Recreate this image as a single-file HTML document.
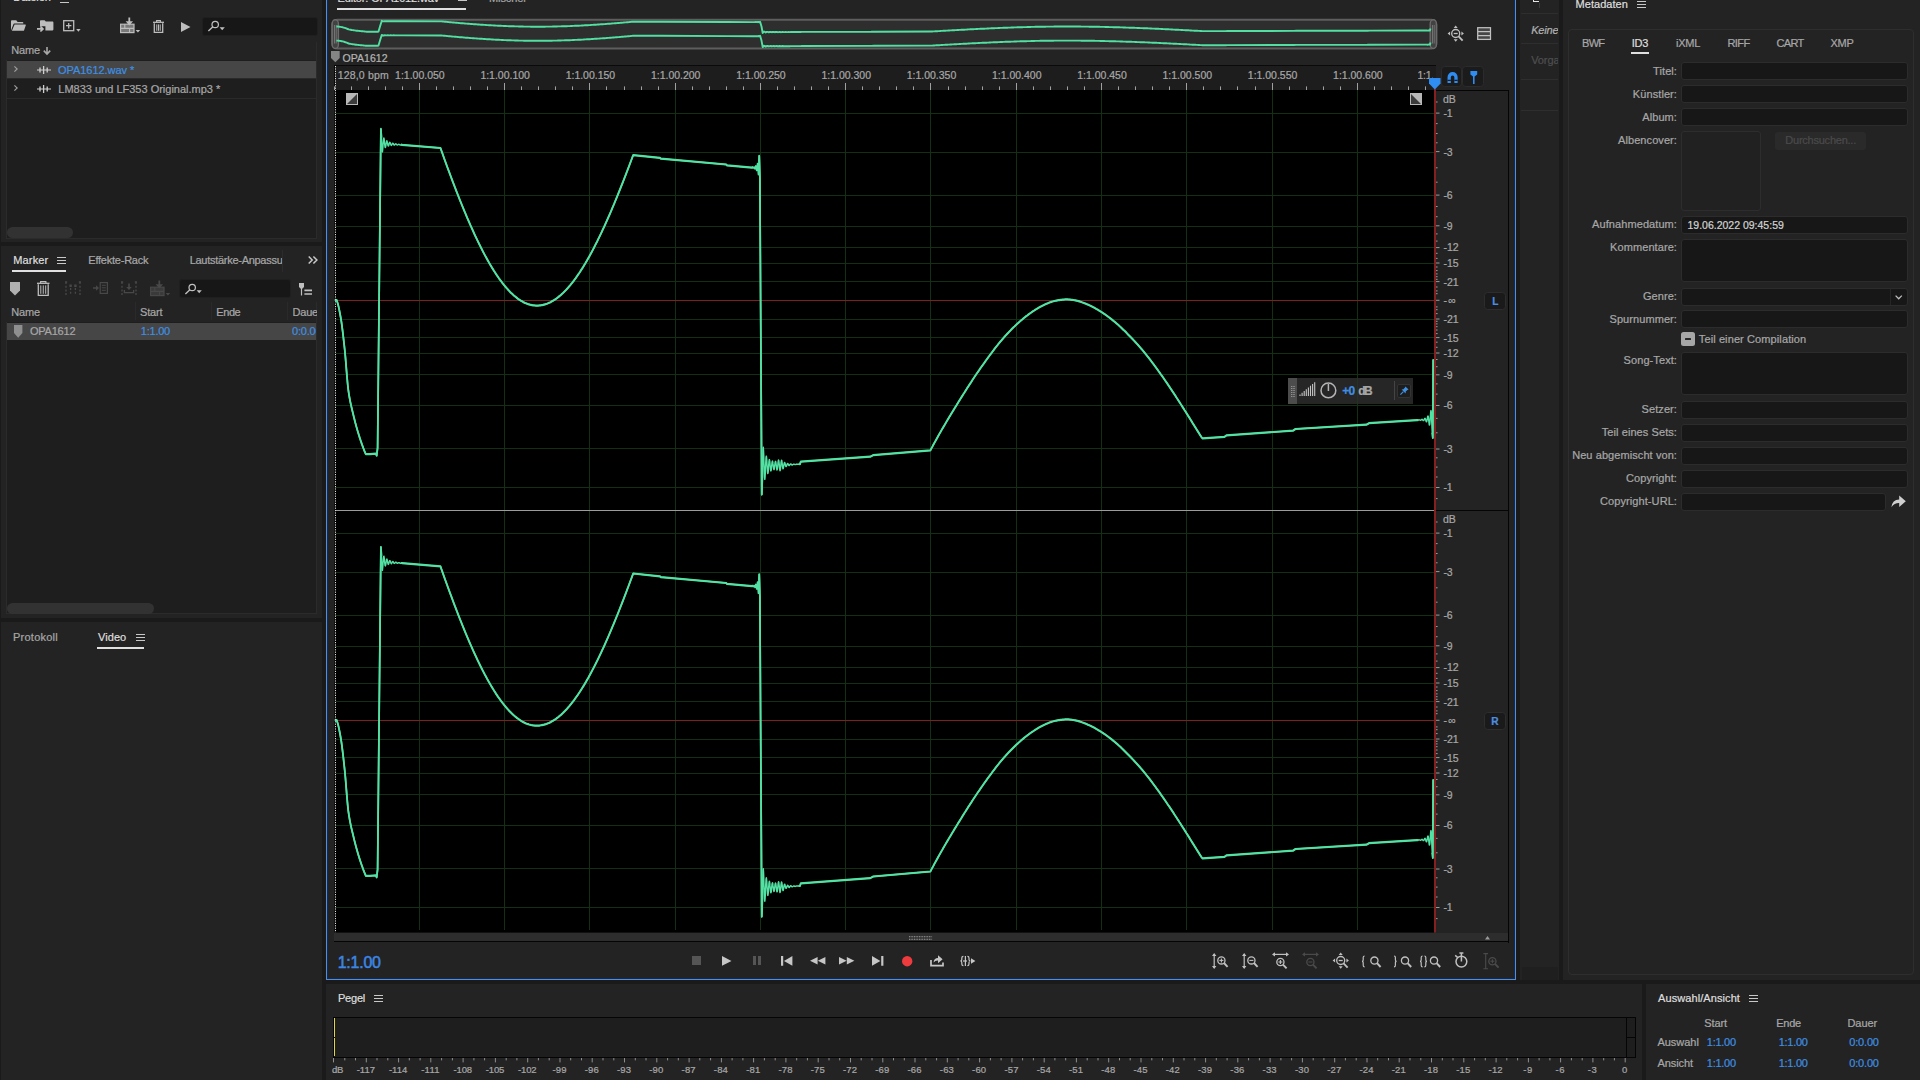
<!DOCTYPE html>
<html><head><meta charset="utf-8"><title>Adobe Audition</title>
<style>
html,body{margin:0;padding:0;background:#1a1a1a;}
body{width:1920px;height:1080px;position:relative;overflow:hidden;font-family:"Liberation Sans",sans-serif;font-size:11px;color:#a7a7a7;}
div{position:absolute;box-sizing:border-box;-webkit-text-stroke:0.22px;}
</style></head><body>
<div style="left:1px;top:0px;width:321px;height:242px;background:#232323;"></div>
<div style="top:-8.11px;font-size:11px;line-height:11px;color:#dedede;white-space:pre;left:13.30px;letter-spacing:-0.059px;">Dateien</div>
<svg style="position:absolute;left:60px;top:-4.5px;overflow:visible" width="9" height="7" viewBox="0 0 9 7" ><path d="M0 .5H9M0 3.5H9M0 6.5H9" stroke="#c8c8c8" stroke-width="1" fill="none"/></svg>
<svg style="position:absolute;left:10.8px;top:20px;overflow:visible" width="15" height="11" viewBox="0 0 15 11" ><path d="M0 1.2Q0 .3 .9 .3H5.2L6.6 1.9H11.6Q12.3 1.9 12.3 2.7V3.6H3.4Q2.6 3.6 2.3 4.4L0 10.6Z" fill="#bdbdbd"/><path d="M3.6 4.5H14.3Q15 4.5 14.8 5.2L13.1 10.2Q12.9 10.8 12.2 10.8H.9Z" fill="#bdbdbd"/></svg>
<svg style="position:absolute;left:36.7px;top:20px;overflow:visible" width="17" height="13" viewBox="0 0 17 13" ><path d="M3 .9Q3 .2 3.8 .2H7.6L8.8 1.6H15.6Q16.4 1.6 16.4 2.4V9.6Q16.4 10.4 15.6 10.4H8.4V6.2H3Z" fill="#bdbdbd"/><path d="M0 8.9H5.2M3.4 6.3L6 8.9L3.4 11.5" stroke="#bdbdbd" stroke-width="1.7" fill="none"/></svg>
<svg style="position:absolute;left:62.6px;top:19.8px;overflow:visible" width="18" height="12" viewBox="0 0 18 12" ><rect x=".7" y=".7" width="10" height="10" fill="none" stroke="#bdbdbd" stroke-width="1.3"/><path d="M5.7 3V8.4M3 5.7H8.4" stroke="#bdbdbd" stroke-width="1.3"/><path d="M13.2 9H17.6L15.4 11.8Z" fill="#bdbdbd"/></svg>
<svg style="position:absolute;left:120px;top:17.3px;overflow:visible" width="20" height="16" viewBox="0 0 20 16" ><rect x=".6" y="7.2" width="13.4" height="8.4" fill="#7a7a7a" stroke="#bdbdbd" stroke-width="1.2"/><path d="M.6 11.4H14M4.8 7.2V11.4M9.6 11.4V15.6" stroke="#bdbdbd" stroke-width="1.1"/><path d="M8.4 .6H10.2V4.2H13L9.3 8.6L5.6 4.2H8.4Z" fill="#bdbdbd"/><path d="M15.6 13H20.2L17.9 15.4Z" fill="#bdbdbd"/></svg>
<svg style="position:absolute;left:153px;top:19.5px;overflow:visible" width="11" height="13" viewBox="0 0 11 13" ><path d="M0 2.3H11" stroke="#bdbdbd" stroke-width="1.3"/><path d="M3.6 2V.6H7.4V2" stroke="#bdbdbd" stroke-width="1.1" fill="none"/><path d="M1.3 3.2V12.4H9.7V3.2" stroke="#bdbdbd" stroke-width="1.3" fill="none"/><path d="M3.8 4.4V10.8M5.5 4.4V10.8M7.2 4.4V10.8" stroke="#bdbdbd" stroke-width="1"/></svg>
<svg style="position:absolute;left:180.8px;top:21.5px;overflow:visible" width="9.5" height="10" viewBox="0 0 9.5 10" ><path d="M0 0L9.5 5.0L0 10Z" fill="#bdbdbd"/></svg>
<div style="left:201.5px;top:16.5px;width:116px;height:19px;background:#171717;border-radius:3px;border:1px solid #1f1f1f;"></div>
<svg style="position:absolute;left:208px;top:21.2px;overflow:visible" width="18" height="10" viewBox="0 0 18 10" ><circle cx="7.2" cy="3.5" r="3.2" fill="none" stroke="#c0c0c0" stroke-width="1.25"/><path d="M4.9 5.8L.4 10" stroke="#c0c0c0" stroke-width="1.4"/><path d="M11.6 6.2H16.8L14.2 9.2Z" fill="#c0c0c0"/></svg>
<div style="left:6px;top:60px;width:311px;height:179px;background:#1e1e1e;border:1px solid #2b2b2b;border-top:none;"></div>
<div style="left:316px;top:42px;width:1px;height:18px;background:#2b2b2b;"></div>
<div style="top:44.89px;font-size:11px;line-height:11px;color:#a7a7a7;white-space:pre;left:11.30px;letter-spacing:-0.161px;">Name</div>
<svg style="position:absolute;left:43px;top:46.5px;overflow:visible" width="8" height="8" viewBox="0 0 8 8" ><path d="M4 0V6.4M.8 3.6L4 7L7.2 3.6" stroke="#a8a8a8" stroke-width="1.6" fill="none"/></svg>
<div style="left:7px;top:60.5px;width:309px;height:17px;background:#464646;"></div>
<div style="left:7px;top:78px;width:309px;height:1px;background:#2a2a2a;"></div>
<div style="left:7px;top:97.5px;width:309px;height:1px;background:#2a2a2a;"></div>
<svg style="position:absolute;left:14.2px;top:65.8px;overflow:visible" width="4" height="6" viewBox="0 0 4 6" ><path d="M.4 .3L3.2 3L.4 5.7" stroke="#a0a0a0" stroke-width="1.1" fill="none"/></svg>
<svg style="position:absolute;left:14.2px;top:85px;overflow:visible" width="4" height="6" viewBox="0 0 4 6" ><path d="M.4 .3L3.2 3L.4 5.7" stroke="#a0a0a0" stroke-width="1.1" fill="none"/></svg>
<svg style="position:absolute;left:37px;top:66.3px;overflow:visible" width="14" height="8" viewBox="0 0 14 8" ><path d="M0 4H14" stroke="#d0d0d0" stroke-width="1"/><path d="M3 1.6V6.4M6.6 0V8M10.2 1.6V6.4" stroke="#d0d0d0" stroke-width="1.3"/></svg>
<svg style="position:absolute;left:37px;top:85.3px;overflow:visible" width="14" height="8" viewBox="0 0 14 8" ><path d="M0 4H14" stroke="#d0d0d0" stroke-width="1"/><path d="M3 1.6V6.4M6.6 0V8M10.2 1.6V6.4" stroke="#d0d0d0" stroke-width="1.3"/></svg>
<div style="top:65.19px;font-size:11px;line-height:11px;color:#3f8fe0;white-space:pre;left:58.00px;letter-spacing:-0.049px;">OPA1612.wav *</div>
<div style="top:84.19px;font-size:11px;line-height:11px;color:#a7a7a7;white-space:pre;left:58.30px;letter-spacing:-0.001px;">LM833 und LF353 Original.mp3 *</div>
<div style="left:7px;top:227px;width:66px;height:11px;background:#323232;border-radius:6px;"></div>
<div style="left:1px;top:246px;width:321px;height:372px;background:#232323;"></div>
<div style="top:254.89px;font-size:11px;line-height:11px;color:#dedede;white-space:pre;left:13.30px;letter-spacing:0.129px;">Marker</div>
<svg style="position:absolute;left:56.7px;top:257px;overflow:visible" width="9" height="7" viewBox="0 0 9 7" ><path d="M0 .5H9M0 3.5H9M0 6.5H9" stroke="#c8c8c8" stroke-width="1" fill="none"/></svg>
<div style="left:12px;top:270px;width:54.3px;height:2px;background:#e0e0e0;"></div>
<div style="top:254.89px;font-size:11px;line-height:11px;color:#a7a7a7;white-space:pre;left:88.30px;letter-spacing:-0.231px;">Effekte-Rack</div>
<div style="top:254.89px;font-size:11px;line-height:11px;color:#a7a7a7;white-space:pre;left:189.70px;width:92.5px;overflow:hidden;letter-spacing:-0.28px;">Lautstärke-Anpassung</div>
<div style="left:282px;top:250px;width:1px;height:22px;background:#2c2c2c;"></div>
<svg style="position:absolute;left:308px;top:255.6px;overflow:visible" width="10" height="8" viewBox="0 0 10 8" ><path d="M.7 .5L4.2 4L.7 7.5M5.4 .5L8.9 4L5.4 7.5" stroke="#c8c8c8" stroke-width="1.5" fill="none"/></svg>
<svg style="position:absolute;left:10.3px;top:281.8px;overflow:visible" width="10" height="13.6" viewBox="0 0 10 13.6" ><path d="M0 0H10V8.432L5.0 13.6L0 8.432Z" fill="#b0b0b0"/></svg>
<svg style="position:absolute;left:37px;top:280.5px;overflow:visible" width="12.5" height="15" viewBox="0 0 12.5 15" ><path d="M0 2.3H12.5" stroke="#bdbdbd" stroke-width="1.3"/><path d="M3.6 2V.6H8.9V2" stroke="#bdbdbd" stroke-width="1.1" fill="none"/><path d="M1.3 3.2V14.4H11.2V3.2" stroke="#bdbdbd" stroke-width="1.3" fill="none"/><path d="M3.8 4.4V12.8M6.25 4.4V12.8M8.7 4.4V12.8" stroke="#bdbdbd" stroke-width="1"/></svg>
<svg style="position:absolute;left:65px;top:281px;overflow:visible" width="16" height="14" viewBox="0 0 16 14" ><path d="M1 1V14.4M15 1V14.4" stroke="#484848" stroke-width="1.3" stroke-dasharray="2 1.7"/><path d="M5.6 7V14.4M10.4 7V14.4" stroke="#484848" stroke-width="1.3" stroke-dasharray="2 1.7"/><path d="M4.4 3.6H6.8V6H4.4ZM9.2 3.6H11.6V6H9.2Z" fill="#484848"/><path d="M0 1H2.2M13.8 1H16" stroke="#484848" stroke-width="1.4"/></svg>
<svg style="position:absolute;left:92.8px;top:282px;overflow:visible" width="15" height="12" viewBox="0 0 15 12" ><path d="M0 5.2H3V3.2L6 6L3 8.8V6.8H0Z" fill="#484848"/><rect x="7.2" y=".6" width="7.2" height="10.8" fill="none" stroke="#484848" stroke-width="1.2"/><path d="M8.8 3.3H12.8M8.8 5.8H12.8M8.8 8.3H12.8" stroke="#484848" stroke-width="1"/></svg>
<svg style="position:absolute;left:121.2px;top:281px;overflow:visible" width="16" height="14" viewBox="0 0 16 14" ><path d="M7.2 2.4H8.8V6H10.8L8 9L5.2 6H7.2Z" fill="#484848"/><path d="M3.4 9V11.6H12.6V9" stroke="#484848" stroke-width="1.3" fill="none"/><path d="M1 1V14.4M15 1V14.4" stroke="#484848" stroke-width="1.3" stroke-dasharray="2 1.7"/><path d="M0 1H2.2M13.8 1H16" stroke="#484848" stroke-width="1.4"/></svg>
<svg style="position:absolute;left:150px;top:280px;overflow:visible" width="20" height="16" viewBox="0 0 20 16" ><rect x=".6" y="7.2" width="13.4" height="8.4" fill="#3a3a3a" stroke="#484848" stroke-width="1.2"/><path d="M.6 11.4H14M4.8 7.2V11.4M9.6 11.4V15.6" stroke="#484848" stroke-width="1.1"/><path d="M8.4 .6H10.2V4.2H13L9.3 8.6L5.6 4.2H8.4Z" fill="#484848"/><path d="M15.6 13H20.2L17.9 15.4Z" fill="#484848"/></svg>
<div style="left:179px;top:279px;width:111.5px;height:18.5px;background:#171717;border-radius:3px;border:1px solid #1f1f1f;"></div>
<svg style="position:absolute;left:185px;top:283.5px;overflow:visible" width="18" height="10" viewBox="0 0 18 10" ><circle cx="7.2" cy="3.5" r="3.2" fill="none" stroke="#c0c0c0" stroke-width="1.25"/><path d="M4.9 5.8L.4 10" stroke="#c0c0c0" stroke-width="1.4"/><path d="M11.6 6.2H16.8L14.2 9.2Z" fill="#c0c0c0"/></svg>
<svg style="position:absolute;left:299.2px;top:282.5px;overflow:visible" width="13" height="13" viewBox="0 0 13 13" ><path d="M0 0H5V4L2.5 6.4L0 4Z" fill="#c0c0c0"/><path d="M2.5 6V12.5" stroke="#c0c0c0" stroke-width="1.2"/><path d="M5.4 7.4H13M5.4 11H13" stroke="#c0c0c0" stroke-width="1.6"/></svg>
<div style="left:6px;top:322px;width:311px;height:292px;background:#1e1e1e;border:1px solid #2b2b2b;border-top:none;"></div>
<div style="left:316px;top:302px;width:1px;height:20px;background:#2b2b2b;"></div>
<div style="top:307.49px;font-size:11px;line-height:11px;color:#a7a7a7;white-space:pre;left:11.30px;letter-spacing:-0.161px;">Name</div>
<div style="top:307.49px;font-size:11px;line-height:11px;color:#a7a7a7;white-space:pre;left:140.00px;letter-spacing:-0.146px;">Start</div>
<div style="top:307.49px;font-size:11px;line-height:11px;color:#a7a7a7;white-space:pre;left:216.30px;letter-spacing:-0.423px;">Ende</div>
<div style="top:307.49px;font-size:11px;line-height:11px;color:#a7a7a7;white-space:pre;left:292.50px;width:24.3px;overflow:hidden;letter-spacing:-0.2px;">Dauer</div>
<div style="left:135px;top:302px;width:1px;height:18px;background:#2a2a2a;"></div>
<div style="left:211px;top:302px;width:1px;height:18px;background:#2a2a2a;"></div>
<div style="left:287px;top:302px;width:1px;height:18px;background:#2a2a2a;"></div>
<div style="left:7px;top:322.5px;width:309px;height:17.5px;background:#464646;"></div>
<svg style="position:absolute;left:14.2px;top:324.7px;overflow:visible" width="8.4" height="12.8" viewBox="0 0 8.4 12.8" ><path d="M0 0H8.4V7.936L4.2 12.8L0 7.936Z" fill="#8f8f8f"/></svg>
<div style="top:325.89px;font-size:11px;line-height:11px;color:#a7a7a7;white-space:pre;left:30.00px;letter-spacing:-0.227px;">OPA1612</div>
<div style="top:325.89px;font-size:11px;line-height:11px;color:#3f8fe0;white-space:pre;left:140.80px;letter-spacing:-0.231px;">1:1.00</div>
<div style="top:325.89px;font-size:11px;line-height:11px;color:#3f8fe0;white-space:pre;left:292.00px;width:24px;overflow:hidden;letter-spacing:-0.2px;">0:0.00</div>
<div style="left:7px;top:603px;width:147px;height:10.5px;background:#323232;border-radius:6px;"></div>
<div style="left:1px;top:622px;width:321px;height:458px;background:#232323;"></div>
<div style="top:631.99px;font-size:11px;line-height:11px;color:#a7a7a7;white-space:pre;left:13.00px;letter-spacing:0.245px;">Protokoll</div>
<div style="top:631.99px;font-size:11px;line-height:11px;color:#dedede;white-space:pre;left:98.00px;letter-spacing:0.073px;">Video</div>
<svg style="position:absolute;left:135.8px;top:634px;overflow:visible" width="9" height="7" viewBox="0 0 9 7" ><path d="M0 .5H9M0 3.5H9M0 6.5H9" stroke="#c8c8c8" stroke-width="1" fill="none"/></svg>
<div style="left:97px;top:647px;width:47.3px;height:2px;background:#e0e0e0;"></div>
<div style="left:326px;top:-4px;width:1190px;height:984px;background:#0c2b57;border:1px solid #5c8ccc;"></div>
<div style="left:328px;top:-2px;width:1186px;height:980px;background:#232323;"></div>
<div style="top:-7.51px;font-size:11px;line-height:11px;color:#dedede;white-space:pre;left:337.50px;letter-spacing:-0.150px;">Editor: OPA1612.wav</div>
<svg style="position:absolute;left:458.3px;top:-6px;overflow:visible" width="9" height="7" viewBox="0 0 9 7" ><path d="M0 .5H9M0 3.5H9M0 6.5H9" stroke="#c8c8c8" stroke-width="1" fill="none"/></svg>
<div style="top:-7.51px;font-size:11px;line-height:11px;color:#a7a7a7;white-space:pre;left:489.00px;letter-spacing:-0.115px;">Mischer</div>
<div style="left:337px;top:8px;width:129px;height:2px;background:#e0e0e0;"></div>
<svg style="position:absolute;left:0;top:0" width="1520" height="60"><rect x="332.2" y="19.7" width="1104.2" height="28.8" rx="5" ry="5" fill="#2e2e2e" stroke="#5e5e5e" stroke-width="2"/><rect x="332.2" y="19.7" width="6.2" height="28.8" rx="3" ry="4" fill="#424242" stroke="#6a6a6a" stroke-width="1.4"/><path d="M334.5 25V43.5M336.2 25V43.5" stroke="#808080" stroke-width=".8"/><rect x="1430.2" y="19.7" width="6.2" height="28.8" rx="3" ry="4" fill="#424242" stroke="#6a6a6a" stroke-width="1.4"/><path d="M1432.5 25V43.5M1434.2 25V43.5" stroke="#808080" stroke-width=".8"/><path d="M336.4 26.5 L337.5 26.5 L338.7 26.6 L339.7 26.8 L340.7 26.9 L341.7 27.1 L342.7 27.3 L343.7 27.6 L344.7 27.9 L345.7 28.2 L346.7 28.6 L347.7 29.0 L348.7 29.4 L349.7 29.6 L350.7 29.8 L351.7 30.0 L352.7 30.1 L353.7 30.3 L354.7 30.4 L355.7 30.6 L356.7 30.7 L357.7 30.8 L358.7 30.9 L359.7 31.0 L360.7 31.1 L361.7 31.2 L362.7 31.3 L363.7 31.4 L364.7 31.5 L365.7 31.6 L366.7 31.7 L370.9 31.7 L376.6 31.7 L377.6 31.7 L378.5 31.5 L380.0 26.5 L381.8 20.8 L382.8 21.4 L383.8 21.4 L384.8 21.1 L385.8 21.3 L386.8 21.3 L387.8 21.2 L388.8 21.3 L389.8 21.3 L390.8 21.2 L391.8 21.3 L392.8 21.3 L393.8 21.2 L394.8 21.3 L395.8 21.3 L396.8 21.3 L397.8 21.3 L398.8 21.3 L399.8 21.3 L400.8 21.3 L401.8 21.3 L402.8 21.3 L441.4 21.4 L442.9 21.5 L443.9 21.6 L444.9 21.7 L445.9 21.8 L446.9 21.9 L447.9 22.0 L448.9 22.1 L449.9 22.2 L450.9 22.3 L451.9 22.4 L452.9 22.5 L453.9 22.5 L454.9 22.6 L455.9 22.7 L456.9 22.8 L457.9 22.9 L458.9 23.0 L459.9 23.1 L460.9 23.2 L461.9 23.2 L462.9 23.3 L463.9 23.4 L464.9 23.5 L465.9 23.6 L466.9 23.6 L467.9 23.7 L468.9 23.8 L469.9 23.9 L470.9 24.0 L471.9 24.0 L472.9 24.1 L473.9 24.2 L474.9 24.3 L475.9 24.3 L476.9 24.4 L477.9 24.5 L478.9 24.5 L479.9 24.6 L480.9 24.7 L481.9 24.7 L482.9 24.8 L483.9 24.9 L484.9 24.9 L485.9 25.0 L486.9 25.1 L487.9 25.1 L488.9 25.2 L489.9 25.2 L490.9 25.3 L491.9 25.4 L492.9 25.4 L493.9 25.5 L494.9 25.5 L495.9 25.6 L496.9 25.6 L497.9 25.7 L498.9 25.7 L499.9 25.8 L500.9 25.8 L501.9 25.9 L502.9 25.9 L503.9 26.0 L504.9 26.0 L505.9 26.0 L506.9 26.1 L507.9 26.1 L508.9 26.2 L509.9 26.2 L510.9 26.2 L511.9 26.3 L512.9 26.3 L513.9 26.3 L514.9 26.4 L515.9 26.4 L516.9 26.4 L517.9 26.4 L518.9 26.5 L519.9 26.5 L520.9 26.5 L521.9 26.5 L522.9 26.5 L523.9 26.6 L524.9 26.6 L525.9 26.6 L526.9 26.6 L527.9 26.6 L528.9 26.6 L529.9 26.6 L530.9 26.7 L531.9 26.7 L532.9 26.7 L533.9 26.7 L534.9 26.7 L535.9 26.7 L536.9 26.7 L537.9 26.7 L538.9 26.7 L539.9 26.7 L540.9 26.7 L541.9 26.7 L542.9 26.7 L543.9 26.7 L544.9 26.7 L545.9 26.6 L546.9 26.6 L547.9 26.6 L548.9 26.6 L549.9 26.6 L550.9 26.6 L551.9 26.6 L552.9 26.5 L553.9 26.5 L554.9 26.5 L555.9 26.5 L556.9 26.5 L557.9 26.4 L558.9 26.4 L559.9 26.4 L560.9 26.4 L561.9 26.3 L562.9 26.3 L563.9 26.3 L564.9 26.2 L565.9 26.2 L566.9 26.2 L567.9 26.1 L568.9 26.1 L569.9 26.1 L570.9 26.0 L571.9 26.0 L572.9 25.9 L573.9 25.9 L574.9 25.8 L575.9 25.8 L576.9 25.8 L577.9 25.7 L578.9 25.7 L579.9 25.6 L580.9 25.6 L581.9 25.5 L582.9 25.5 L583.9 25.4 L584.9 25.3 L585.9 25.3 L586.9 25.2 L587.9 25.2 L588.9 25.1 L589.9 25.1 L590.9 25.0 L591.9 24.9 L592.9 24.9 L593.9 24.8 L594.9 24.7 L595.9 24.7 L596.9 24.6 L597.9 24.5 L598.9 24.5 L599.9 24.4 L600.9 24.3 L601.9 24.3 L602.9 24.2 L603.9 24.1 L604.9 24.1 L605.9 24.0 L606.9 23.9 L607.9 23.8 L608.9 23.8 L609.9 23.7 L610.9 23.6 L611.9 23.5 L612.9 23.4 L613.9 23.4 L614.9 23.3 L615.9 23.2 L616.9 23.1 L617.9 23.0 L618.9 23.0 L619.9 22.9 L620.9 22.8 L621.9 22.7 L622.9 22.6 L623.9 22.5 L624.9 22.4 L625.9 22.4 L626.9 22.3 L627.9 22.2 L628.9 22.1 L629.9 22.0 L630.9 21.9 L631.9 21.8 L632.9 21.7 L634.1 21.6 L660.9 21.7 L727.1 22.0 L752.9 22.1 L753.7 22.1 L754.5 22.1 L755.3 22.0 L756.1 22.1 L756.9 22.0 L757.7 22.2 L758.5 21.9 L759.3 22.3 L760.1 21.7 L761.5 26.5 L762.7 33.0 L763.7 31.7 L764.7 31.8 L765.7 32.5 L766.7 31.9 L767.7 31.9 L768.7 32.3 L769.7 32.0 L770.7 31.9 L771.7 32.2 L772.7 32.0 L773.7 31.9 L774.7 32.2 L775.7 32.0 L776.7 31.9 L777.7 32.2 L778.7 32.1 L779.7 31.9 L780.7 32.2 L781.7 32.1 L782.7 31.9 L783.7 32.1 L784.7 32.1 L785.7 32.0 L786.7 32.1 L787.7 32.1 L788.7 32.0 L789.7 32.1 L790.7 32.0 L791.7 32.0 L792.7 32.0 L793.7 32.0 L794.7 32.0 L795.7 32.0 L796.7 32.0 L797.7 32.0 L798.7 32.0 L799.7 32.0 L800.7 32.0 L801.7 31.9 L871.2 31.8 L874.1 31.7 L931.3 31.5 L932.3 31.5 L933.3 31.4 L934.3 31.4 L935.3 31.3 L936.3 31.2 L937.3 31.2 L938.3 31.1 L939.3 31.1 L940.3 31.0 L941.3 30.9 L942.3 30.9 L943.3 30.8 L944.3 30.8 L945.3 30.7 L946.3 30.6 L947.3 30.6 L948.3 30.5 L949.3 30.5 L950.3 30.4 L951.3 30.4 L952.3 30.3 L953.3 30.3 L954.3 30.2 L955.3 30.1 L956.3 30.1 L957.3 30.0 L958.3 30.0 L959.3 29.9 L960.3 29.9 L961.3 29.8 L962.3 29.8 L963.3 29.7 L964.3 29.7 L965.3 29.6 L966.3 29.6 L967.3 29.5 L968.3 29.4 L969.3 29.4 L970.3 29.3 L971.3 29.3 L972.3 29.2 L973.3 29.2 L974.3 29.1 L975.3 29.1 L976.3 29.0 L977.3 29.0 L978.3 28.9 L979.3 28.9 L980.3 28.8 L981.3 28.8 L982.3 28.7 L983.3 28.7 L984.3 28.7 L985.3 28.6 L986.3 28.6 L987.3 28.5 L988.3 28.5 L989.3 28.4 L990.3 28.4 L991.3 28.3 L992.3 28.3 L993.3 28.2 L994.3 28.2 L995.3 28.1 L996.3 28.1 L997.3 28.1 L998.3 28.0 L999.3 28.0 L1000.3 27.9 L1001.3 27.9 L1002.3 27.9 L1003.3 27.8 L1004.3 27.8 L1005.3 27.7 L1006.3 27.7 L1007.3 27.7 L1008.3 27.6 L1009.3 27.6 L1010.3 27.6 L1011.3 27.5 L1012.3 27.5 L1013.3 27.5 L1014.3 27.4 L1015.3 27.4 L1016.3 27.4 L1017.3 27.3 L1018.3 27.3 L1019.3 27.3 L1020.3 27.2 L1021.3 27.2 L1022.3 27.2 L1023.3 27.1 L1024.3 27.1 L1025.3 27.1 L1026.3 27.1 L1027.3 27.0 L1028.3 27.0 L1029.3 27.0 L1030.3 27.0 L1031.3 26.9 L1032.3 26.9 L1033.3 26.9 L1034.3 26.9 L1035.3 26.8 L1036.3 26.8 L1037.3 26.8 L1038.3 26.8 L1039.3 26.8 L1040.3 26.7 L1041.3 26.7 L1042.3 26.7 L1043.3 26.7 L1044.3 26.7 L1045.3 26.7 L1046.3 26.6 L1047.3 26.6 L1048.3 26.6 L1049.3 26.6 L1050.3 26.6 L1051.3 26.6 L1052.3 26.6 L1053.3 26.6 L1054.3 26.5 L1055.3 26.5 L1056.3 26.5 L1057.3 26.5 L1058.3 26.5 L1059.3 26.5 L1060.3 26.5 L1061.3 26.5 L1062.3 26.5 L1063.3 26.5 L1064.3 26.5 L1065.3 26.5 L1066.3 26.5 L1067.3 26.5 L1068.3 26.5 L1069.3 26.5 L1070.3 26.5 L1071.3 26.5 L1072.3 26.5 L1073.3 26.5 L1074.3 26.5 L1075.3 26.5 L1076.3 26.5 L1077.3 26.5 L1078.3 26.5 L1079.3 26.5 L1080.3 26.5 L1081.3 26.6 L1082.3 26.6 L1083.3 26.6 L1084.3 26.6 L1085.3 26.6 L1086.3 26.6 L1087.3 26.6 L1088.3 26.6 L1089.3 26.7 L1090.3 26.7 L1091.3 26.7 L1092.3 26.7 L1093.3 26.7 L1094.3 26.7 L1095.3 26.8 L1096.3 26.8 L1097.3 26.8 L1098.3 26.8 L1099.3 26.8 L1100.3 26.9 L1101.3 26.9 L1102.3 26.9 L1103.3 26.9 L1104.3 26.9 L1105.3 27.0 L1106.3 27.0 L1107.3 27.0 L1108.3 27.0 L1109.3 27.1 L1110.3 27.1 L1111.3 27.1 L1112.3 27.1 L1113.3 27.2 L1114.3 27.2 L1115.3 27.2 L1116.3 27.3 L1117.3 27.3 L1118.3 27.3 L1119.3 27.3 L1120.3 27.4 L1121.3 27.4 L1122.3 27.4 L1123.3 27.5 L1124.3 27.5 L1125.3 27.5 L1126.3 27.6 L1127.3 27.6 L1128.3 27.6 L1129.3 27.7 L1130.3 27.7 L1131.3 27.7 L1132.3 27.8 L1133.3 27.8 L1134.3 27.8 L1135.3 27.9 L1136.3 27.9 L1137.3 28.0 L1138.3 28.0 L1139.3 28.0 L1140.3 28.1 L1141.3 28.1 L1142.3 28.1 L1143.3 28.2 L1144.3 28.2 L1145.3 28.3 L1146.3 28.3 L1147.3 28.3 L1148.3 28.4 L1149.3 28.4 L1150.3 28.5 L1151.3 28.5 L1152.3 28.6 L1153.3 28.6 L1154.3 28.6 L1155.3 28.7 L1156.3 28.7 L1157.3 28.8 L1158.3 28.8 L1159.3 28.9 L1160.3 28.9 L1161.3 29.0 L1162.3 29.0 L1163.3 29.1 L1164.3 29.1 L1165.3 29.2 L1166.3 29.2 L1167.3 29.3 L1168.3 29.3 L1169.3 29.4 L1170.3 29.4 L1171.3 29.5 L1172.3 29.5 L1173.3 29.6 L1174.3 29.6 L1175.3 29.7 L1176.3 29.7 L1177.3 29.8 L1178.3 29.8 L1179.3 29.9 L1180.3 29.9 L1181.3 30.0 L1182.3 30.0 L1183.3 30.1 L1184.3 30.1 L1185.3 30.2 L1186.3 30.2 L1187.3 30.3 L1188.3 30.3 L1189.3 30.4 L1190.3 30.5 L1191.3 30.5 L1192.3 30.6 L1193.3 30.6 L1194.3 30.7 L1195.3 30.7 L1196.3 30.8 L1197.3 30.8 L1198.3 30.9 L1199.3 30.9 L1200.3 31.0 L1201.3 31.0 L1202.3 31.1 L1203.5 31.1 L1225.4 31.1 L1227.4 31.0 L1293.8 30.9 L1296.4 30.8 L1367.3 30.7 L1369.9 30.6 L1417.9 30.5 L1418.7 30.5 L1419.5 30.5 L1420.3 30.5 L1421.1 30.5 L1421.9 30.5 L1422.7 30.5 L1423.5 30.5 L1424.3 30.5 L1425.1 30.5 L1425.9 30.5 L1426.7 30.5 L1427.5 30.6 L1428.3 30.5 L1429.1 30.4 L1429.9 30.6 L1430.5 28.5" fill="none" stroke="#52e0a2" stroke-width="1.9" stroke-linejoin="round"/><path d="M336.4 40.6 L337.5 40.6 L338.7 40.7 L339.7 40.9 L340.7 41.0 L341.7 41.2 L342.7 41.4 L343.7 41.7 L344.7 42.0 L345.7 42.3 L346.7 42.7 L347.7 43.1 L348.7 43.5 L349.7 43.7 L350.7 43.9 L351.7 44.1 L352.7 44.2 L353.7 44.4 L354.7 44.5 L355.7 44.7 L356.7 44.8 L357.7 44.9 L358.7 45.0 L359.7 45.1 L360.7 45.2 L361.7 45.3 L362.7 45.4 L363.7 45.5 L364.7 45.6 L365.7 45.7 L366.7 45.8 L370.9 45.8 L376.6 45.8 L377.6 45.8 L378.5 45.6 L380.0 40.6 L381.8 34.9 L382.8 35.5 L383.8 35.5 L384.8 35.2 L385.8 35.4 L386.8 35.4 L387.8 35.3 L388.8 35.4 L389.8 35.4 L390.8 35.3 L391.8 35.4 L392.8 35.4 L393.8 35.3 L394.8 35.4 L395.8 35.4 L396.8 35.4 L397.8 35.4 L398.8 35.4 L399.8 35.4 L400.8 35.4 L401.8 35.4 L402.8 35.4 L441.4 35.5 L442.9 35.6 L443.9 35.7 L444.9 35.8 L445.9 35.9 L446.9 36.0 L447.9 36.1 L448.9 36.2 L449.9 36.3 L450.9 36.4 L451.9 36.5 L452.9 36.6 L453.9 36.6 L454.9 36.7 L455.9 36.8 L456.9 36.9 L457.9 37.0 L458.9 37.1 L459.9 37.2 L460.9 37.3 L461.9 37.3 L462.9 37.4 L463.9 37.5 L464.9 37.6 L465.9 37.7 L466.9 37.7 L467.9 37.8 L468.9 37.9 L469.9 38.0 L470.9 38.1 L471.9 38.1 L472.9 38.2 L473.9 38.3 L474.9 38.4 L475.9 38.4 L476.9 38.5 L477.9 38.6 L478.9 38.6 L479.9 38.7 L480.9 38.8 L481.9 38.8 L482.9 38.9 L483.9 39.0 L484.9 39.0 L485.9 39.1 L486.9 39.2 L487.9 39.2 L488.9 39.3 L489.9 39.3 L490.9 39.4 L491.9 39.5 L492.9 39.5 L493.9 39.6 L494.9 39.6 L495.9 39.7 L496.9 39.7 L497.9 39.8 L498.9 39.8 L499.9 39.9 L500.9 39.9 L501.9 40.0 L502.9 40.0 L503.9 40.1 L504.9 40.1 L505.9 40.1 L506.9 40.2 L507.9 40.2 L508.9 40.3 L509.9 40.3 L510.9 40.3 L511.9 40.4 L512.9 40.4 L513.9 40.4 L514.9 40.5 L515.9 40.5 L516.9 40.5 L517.9 40.5 L518.9 40.6 L519.9 40.6 L520.9 40.6 L521.9 40.6 L522.9 40.6 L523.9 40.7 L524.9 40.7 L525.9 40.7 L526.9 40.7 L527.9 40.7 L528.9 40.7 L529.9 40.7 L530.9 40.8 L531.9 40.8 L532.9 40.8 L533.9 40.8 L534.9 40.8 L535.9 40.8 L536.9 40.8 L537.9 40.8 L538.9 40.8 L539.9 40.8 L540.9 40.8 L541.9 40.8 L542.9 40.8 L543.9 40.8 L544.9 40.8 L545.9 40.7 L546.9 40.7 L547.9 40.7 L548.9 40.7 L549.9 40.7 L550.9 40.7 L551.9 40.7 L552.9 40.6 L553.9 40.6 L554.9 40.6 L555.9 40.6 L556.9 40.6 L557.9 40.5 L558.9 40.5 L559.9 40.5 L560.9 40.5 L561.9 40.4 L562.9 40.4 L563.9 40.4 L564.9 40.3 L565.9 40.3 L566.9 40.3 L567.9 40.2 L568.9 40.2 L569.9 40.2 L570.9 40.1 L571.9 40.1 L572.9 40.0 L573.9 40.0 L574.9 39.9 L575.9 39.9 L576.9 39.9 L577.9 39.8 L578.9 39.8 L579.9 39.7 L580.9 39.7 L581.9 39.6 L582.9 39.6 L583.9 39.5 L584.9 39.4 L585.9 39.4 L586.9 39.3 L587.9 39.3 L588.9 39.2 L589.9 39.2 L590.9 39.1 L591.9 39.0 L592.9 39.0 L593.9 38.9 L594.9 38.8 L595.9 38.8 L596.9 38.7 L597.9 38.6 L598.9 38.6 L599.9 38.5 L600.9 38.4 L601.9 38.4 L602.9 38.3 L603.9 38.2 L604.9 38.2 L605.9 38.1 L606.9 38.0 L607.9 37.9 L608.9 37.9 L609.9 37.8 L610.9 37.7 L611.9 37.6 L612.9 37.5 L613.9 37.5 L614.9 37.4 L615.9 37.3 L616.9 37.2 L617.9 37.1 L618.9 37.1 L619.9 37.0 L620.9 36.9 L621.9 36.8 L622.9 36.7 L623.9 36.6 L624.9 36.5 L625.9 36.5 L626.9 36.4 L627.9 36.3 L628.9 36.2 L629.9 36.1 L630.9 36.0 L631.9 35.9 L632.9 35.8 L634.1 35.7 L660.9 35.8 L727.1 36.1 L752.9 36.2 L753.7 36.2 L754.5 36.2 L755.3 36.1 L756.1 36.2 L756.9 36.1 L757.7 36.3 L758.5 36.0 L759.3 36.4 L760.1 35.8 L761.5 40.6 L762.7 47.1 L763.7 45.8 L764.7 45.9 L765.7 46.6 L766.7 46.0 L767.7 46.0 L768.7 46.4 L769.7 46.1 L770.7 46.0 L771.7 46.3 L772.7 46.1 L773.7 46.0 L774.7 46.3 L775.7 46.1 L776.7 46.0 L777.7 46.3 L778.7 46.2 L779.7 46.0 L780.7 46.3 L781.7 46.2 L782.7 46.0 L783.7 46.2 L784.7 46.2 L785.7 46.1 L786.7 46.2 L787.7 46.2 L788.7 46.1 L789.7 46.2 L790.7 46.1 L791.7 46.1 L792.7 46.1 L793.7 46.1 L794.7 46.1 L795.7 46.1 L796.7 46.1 L797.7 46.1 L798.7 46.1 L799.7 46.1 L800.7 46.1 L801.7 46.0 L871.2 45.9 L874.1 45.8 L931.3 45.6 L932.3 45.6 L933.3 45.5 L934.3 45.5 L935.3 45.4 L936.3 45.3 L937.3 45.3 L938.3 45.2 L939.3 45.2 L940.3 45.1 L941.3 45.0 L942.3 45.0 L943.3 44.9 L944.3 44.9 L945.3 44.8 L946.3 44.7 L947.3 44.7 L948.3 44.6 L949.3 44.6 L950.3 44.5 L951.3 44.5 L952.3 44.4 L953.3 44.4 L954.3 44.3 L955.3 44.2 L956.3 44.2 L957.3 44.1 L958.3 44.1 L959.3 44.0 L960.3 44.0 L961.3 43.9 L962.3 43.9 L963.3 43.8 L964.3 43.8 L965.3 43.7 L966.3 43.7 L967.3 43.6 L968.3 43.5 L969.3 43.5 L970.3 43.4 L971.3 43.4 L972.3 43.3 L973.3 43.3 L974.3 43.2 L975.3 43.2 L976.3 43.1 L977.3 43.1 L978.3 43.0 L979.3 43.0 L980.3 42.9 L981.3 42.9 L982.3 42.8 L983.3 42.8 L984.3 42.8 L985.3 42.7 L986.3 42.7 L987.3 42.6 L988.3 42.6 L989.3 42.5 L990.3 42.5 L991.3 42.4 L992.3 42.4 L993.3 42.3 L994.3 42.3 L995.3 42.2 L996.3 42.2 L997.3 42.2 L998.3 42.1 L999.3 42.1 L1000.3 42.0 L1001.3 42.0 L1002.3 42.0 L1003.3 41.9 L1004.3 41.9 L1005.3 41.8 L1006.3 41.8 L1007.3 41.8 L1008.3 41.7 L1009.3 41.7 L1010.3 41.7 L1011.3 41.6 L1012.3 41.6 L1013.3 41.6 L1014.3 41.5 L1015.3 41.5 L1016.3 41.5 L1017.3 41.4 L1018.3 41.4 L1019.3 41.4 L1020.3 41.3 L1021.3 41.3 L1022.3 41.3 L1023.3 41.2 L1024.3 41.2 L1025.3 41.2 L1026.3 41.2 L1027.3 41.1 L1028.3 41.1 L1029.3 41.1 L1030.3 41.1 L1031.3 41.0 L1032.3 41.0 L1033.3 41.0 L1034.3 41.0 L1035.3 40.9 L1036.3 40.9 L1037.3 40.9 L1038.3 40.9 L1039.3 40.9 L1040.3 40.8 L1041.3 40.8 L1042.3 40.8 L1043.3 40.8 L1044.3 40.8 L1045.3 40.8 L1046.3 40.7 L1047.3 40.7 L1048.3 40.7 L1049.3 40.7 L1050.3 40.7 L1051.3 40.7 L1052.3 40.7 L1053.3 40.7 L1054.3 40.6 L1055.3 40.6 L1056.3 40.6 L1057.3 40.6 L1058.3 40.6 L1059.3 40.6 L1060.3 40.6 L1061.3 40.6 L1062.3 40.6 L1063.3 40.6 L1064.3 40.6 L1065.3 40.6 L1066.3 40.6 L1067.3 40.6 L1068.3 40.6 L1069.3 40.6 L1070.3 40.6 L1071.3 40.6 L1072.3 40.6 L1073.3 40.6 L1074.3 40.6 L1075.3 40.6 L1076.3 40.6 L1077.3 40.6 L1078.3 40.6 L1079.3 40.6 L1080.3 40.6 L1081.3 40.7 L1082.3 40.7 L1083.3 40.7 L1084.3 40.7 L1085.3 40.7 L1086.3 40.7 L1087.3 40.7 L1088.3 40.7 L1089.3 40.8 L1090.3 40.8 L1091.3 40.8 L1092.3 40.8 L1093.3 40.8 L1094.3 40.8 L1095.3 40.9 L1096.3 40.9 L1097.3 40.9 L1098.3 40.9 L1099.3 40.9 L1100.3 41.0 L1101.3 41.0 L1102.3 41.0 L1103.3 41.0 L1104.3 41.0 L1105.3 41.1 L1106.3 41.1 L1107.3 41.1 L1108.3 41.1 L1109.3 41.2 L1110.3 41.2 L1111.3 41.2 L1112.3 41.2 L1113.3 41.3 L1114.3 41.3 L1115.3 41.3 L1116.3 41.4 L1117.3 41.4 L1118.3 41.4 L1119.3 41.4 L1120.3 41.5 L1121.3 41.5 L1122.3 41.5 L1123.3 41.6 L1124.3 41.6 L1125.3 41.6 L1126.3 41.7 L1127.3 41.7 L1128.3 41.7 L1129.3 41.8 L1130.3 41.8 L1131.3 41.8 L1132.3 41.9 L1133.3 41.9 L1134.3 41.9 L1135.3 42.0 L1136.3 42.0 L1137.3 42.1 L1138.3 42.1 L1139.3 42.1 L1140.3 42.2 L1141.3 42.2 L1142.3 42.2 L1143.3 42.3 L1144.3 42.3 L1145.3 42.4 L1146.3 42.4 L1147.3 42.4 L1148.3 42.5 L1149.3 42.5 L1150.3 42.6 L1151.3 42.6 L1152.3 42.7 L1153.3 42.7 L1154.3 42.7 L1155.3 42.8 L1156.3 42.8 L1157.3 42.9 L1158.3 42.9 L1159.3 43.0 L1160.3 43.0 L1161.3 43.1 L1162.3 43.1 L1163.3 43.2 L1164.3 43.2 L1165.3 43.3 L1166.3 43.3 L1167.3 43.4 L1168.3 43.4 L1169.3 43.5 L1170.3 43.5 L1171.3 43.6 L1172.3 43.6 L1173.3 43.7 L1174.3 43.7 L1175.3 43.8 L1176.3 43.8 L1177.3 43.9 L1178.3 43.9 L1179.3 44.0 L1180.3 44.0 L1181.3 44.1 L1182.3 44.1 L1183.3 44.2 L1184.3 44.2 L1185.3 44.3 L1186.3 44.3 L1187.3 44.4 L1188.3 44.4 L1189.3 44.5 L1190.3 44.6 L1191.3 44.6 L1192.3 44.7 L1193.3 44.7 L1194.3 44.8 L1195.3 44.8 L1196.3 44.9 L1197.3 44.9 L1198.3 45.0 L1199.3 45.0 L1200.3 45.1 L1201.3 45.1 L1202.3 45.2 L1203.5 45.2 L1225.4 45.2 L1227.4 45.1 L1293.8 45.0 L1296.4 44.9 L1367.3 44.8 L1369.9 44.7 L1417.9 44.6 L1418.7 44.6 L1419.5 44.6 L1420.3 44.6 L1421.1 44.6 L1421.9 44.6 L1422.7 44.6 L1423.5 44.6 L1424.3 44.6 L1425.1 44.6 L1425.9 44.6 L1426.7 44.6 L1427.5 44.7 L1428.3 44.6 L1429.1 44.5 L1429.9 44.7 L1430.5 42.6" fill="none" stroke="#52e0a2" stroke-width="1.9" stroke-linejoin="round"/></svg>
<svg style="position:absolute;left:1446.7px;top:25px;overflow:visible" width="18" height="18" viewBox="0 0 18 18" ><circle cx="8.7" cy="8.5" r="4" fill="none" stroke="#c0c0c0" stroke-width="1.35"/><path d="M6.7 8.5H10.7" stroke="#c0c0c0" stroke-width="1.3"/><path d="M11.6 11.4L15.6 15.6" stroke="#c0c0c0" stroke-width="1.9"/><path d="M8.7 .4L10.7 2.9H6.7ZM8.7 16.8L10.7 14.3H6.7ZM.6 8.5L3.1 6.5V10.5ZM16.9 8.5L14.4 6.5V10.5Z" fill="#c0c0c0"/></svg>
<svg style="position:absolute;left:1476.7px;top:27px;overflow:visible" width="15" height="13" viewBox="0 0 15 13" ><rect x=".7" y=".7" width="12.8" height="11.7" fill="#454545" stroke="#c0c0c0" stroke-width="1.25"/><path d="M.7 4.6H13.5M.7 8.5H13.5" stroke="#c0c0c0" stroke-width="1.25"/></svg>
<svg style="position:absolute;left:331px;top:51.4px;overflow:visible" width="8.7" height="11.2" viewBox="0 0 8.7 11.2" ><path d="M0 0H8.7V6.944L4.35 11.2L0 6.944Z" fill="#858585"/></svg>
<div style="top:52.71px;font-size:10.5px;line-height:10.5px;color:#b4b4b4;white-space:pre;left:342.60px;letter-spacing:0.035px;">OPA1612</div>
<div style="left:334px;top:65px;width:1101.5px;height:25px;background:#1d1d1d;border-top:1px solid #0a0a0a;border-left:1px solid #0a0a0a;"></div>
<div style="top:70.01px;font-size:10.5px;line-height:10.5px;color:#a7a7a7;white-space:pre;left:337.70px;letter-spacing:0.187px;">128,0 bpm</div>
<svg style="position:absolute;left:0;top:0" width="1440" height="92"><path d="M334.5 86.4V90M351.5 86.4V90M368.5 86.4V90M385.5 86.4V90M402.5 86.4V90M419.5 83V90M436.5 86.4V90M453.5 86.4V90M470.5 86.4V90M487.5 86.4V90M504.5 83V90M521.5 86.4V90M538.5 86.4V90M555.5 86.4V90M572.5 86.4V90M589.5 83V90M606.5 86.4V90M624.5 86.4V90M641.5 86.4V90M658.5 86.4V90M675.5 83V90M692.5 86.4V90M709.5 86.4V90M726.5 86.4V90M743.5 86.4V90M760.5 83V90M777.5 86.4V90M794.5 86.4V90M811.5 86.4V90M828.5 86.4V90M845.5 83V90M862.5 86.4V90M879.5 86.4V90M896.5 86.4V90M913.5 86.4V90M930.5 83V90M948.5 86.4V90M965.5 86.4V90M982.5 86.4V90M999.5 86.4V90M1016.5 83V90M1033.5 86.4V90M1050.5 86.4V90M1067.5 86.4V90M1084.5 86.4V90M1101.5 83V90M1118.5 86.4V90M1135.5 86.4V90M1152.5 86.4V90M1169.5 86.4V90M1186.5 83V90M1203.5 86.4V90M1220.5 86.4V90M1237.5 86.4V90M1255.5 86.4V90M1272.5 83V90M1289.5 86.4V90M1306.5 86.4V90M1323.5 86.4V90M1340.5 86.4V90M1357.5 83V90M1374.5 86.4V90M1391.5 86.4V90M1408.5 86.4V90M1425.5 86.4V90" stroke="#a0a0a0" stroke-width="1" fill="none"/></svg>
<div style="top:70.01px;font-size:10.5px;line-height:10.5px;color:#a7a7a7;white-space:pre;left:395.12px;letter-spacing:-0.013px;">1:1.00.050</div>
<div style="top:70.01px;font-size:10.5px;line-height:10.5px;color:#a7a7a7;white-space:pre;left:480.39px;letter-spacing:-0.013px;">1:1.00.100</div>
<div style="top:70.01px;font-size:10.5px;line-height:10.5px;color:#a7a7a7;white-space:pre;left:565.66px;letter-spacing:-0.013px;">1:1.00.150</div>
<div style="top:70.01px;font-size:10.5px;line-height:10.5px;color:#a7a7a7;white-space:pre;left:650.93px;letter-spacing:-0.013px;">1:1.00.200</div>
<div style="top:70.01px;font-size:10.5px;line-height:10.5px;color:#a7a7a7;white-space:pre;left:736.20px;letter-spacing:-0.013px;">1:1.00.250</div>
<div style="top:70.01px;font-size:10.5px;line-height:10.5px;color:#a7a7a7;white-space:pre;left:821.47px;letter-spacing:-0.013px;">1:1.00.300</div>
<div style="top:70.01px;font-size:10.5px;line-height:10.5px;color:#a7a7a7;white-space:pre;left:906.74px;letter-spacing:-0.013px;">1:1.00.350</div>
<div style="top:70.01px;font-size:10.5px;line-height:10.5px;color:#a7a7a7;white-space:pre;left:992.01px;letter-spacing:-0.013px;">1:1.00.400</div>
<div style="top:70.01px;font-size:10.5px;line-height:10.5px;color:#a7a7a7;white-space:pre;left:1077.28px;letter-spacing:-0.013px;">1:1.00.450</div>
<div style="top:70.01px;font-size:10.5px;line-height:10.5px;color:#a7a7a7;white-space:pre;left:1162.55px;letter-spacing:-0.013px;">1:1.00.500</div>
<div style="top:70.01px;font-size:10.5px;line-height:10.5px;color:#a7a7a7;white-space:pre;left:1247.82px;letter-spacing:-0.013px;">1:1.00.550</div>
<div style="top:70.01px;font-size:10.5px;line-height:10.5px;color:#a7a7a7;white-space:pre;left:1333.09px;letter-spacing:-0.013px;">1:1.00.600</div>
<div style="top:70.01px;font-size:10.5px;line-height:10.5px;color:#a7a7a7;white-space:pre;left:1417.50px;width:15.8px;overflow:hidden;letter-spacing:-0.25px;">1:1.00.650</div>
<div style="left:1441.1000000000001px;top:66px;width:21.2px;height:21.4px;background:#1b1b1b;border-radius:3.5px;border:1px solid #2b2b2b;"></div>
<div style="left:1462.4px;top:66px;width:21.2px;height:21.4px;background:#1b1b1b;border-radius:3.5px;border:1px solid #2b2b2b;"></div>
<svg style="position:absolute;left:1445.5px;top:70.5px;overflow:visible" width="13.2" height="13.2" viewBox="0 0 12 12" ><path d="M1.4 11V5.6A4.6 4.6 0 0 1 10.6 5.6V11H7.6V5.8A1.6 1.6 0 0 0 4.4 5.8V11Z" fill="#2f8cf0"/><path d="M1.4 8.6H4.4M7.6 8.6H10.6" stroke="#191919" stroke-width="1.1"/></svg>
<svg style="position:absolute;left:1469.5px;top:70.5px;overflow:visible" width="8" height="13" viewBox="0 0 8 13" ><path d="M.4 0H7.2V3.4L4.6 5.4H3L.4 3.4Z" fill="#2f8cf0"/><path d="M3.8 5V13" stroke="#2f8cf0" stroke-width="1.6"/></svg>
<svg style="position:absolute;left:0;top:0" width="1440" height="940"><rect x="334.5" y="90" width="1099.5" height="842.5" fill="#000"/><path d="M419.5 90V929.5M504.5 90V929.5M589.5 90V929.5M675.5 90V929.5M760.5 90V929.5M845.5 90V929.5M930.5 90V929.5M1016.5 90V929.5M1101.5 90V929.5M1186.5 90V929.5M1272.5 90V929.5M1357.5 90V929.5M334.5 113.5H1434M334.5 487.5H1434M334.5 152.5H1434M334.5 448.5H1434M334.5 195.5H1434M334.5 405.5H1434M334.5 226.5H1434M334.5 374.5H1434M334.5 247.5H1434M334.5 353.5H1434M334.5 263.5H1434M334.5 337.5H1434M334.5 281.5H1434M334.5 319.5H1434M334.5 533.5H1434M334.5 907.5H1434M334.5 572.5H1434M334.5 868.5H1434M334.5 615.5H1434M334.5 825.5H1434M334.5 646.5H1434M334.5 794.5H1434M334.5 667.5H1434M334.5 773.5H1434M334.5 683.5H1434M334.5 757.5H1434M334.5 701.5H1434M334.5 739.5H1434" stroke="#143014" stroke-width="1" fill="none" shape-rendering="crispEdges"/><path d="M334.5 300.5H1434" stroke="#7c2020" stroke-width="1" shape-rendering="crispEdges"/><path d="M334.5 720.5H1434" stroke="#7c2020" stroke-width="1" shape-rendering="crispEdges"/><path d="M334.5 510.5H1434" stroke="#9c9c9c" stroke-width="1" shape-rendering="crispEdges"/><g fill="none" stroke="#54e2a4" stroke-width="1.72" stroke-linejoin="round" stroke-linecap="round"><path d="M335.5 300.0 L336.6 300.0 L336.8 300.5 L337.3 301.9 L337.8 303.6 L338.3 305.6 L338.8 307.7 L339.3 310.1 L339.8 312.6 L340.3 315.3 L340.8 318.1 L341.3 321.2 L341.8 324.7 L342.3 328.5 L342.8 332.5 L343.3 336.8 L343.8 341.3 L344.3 345.8 L344.8 350.5 L345.3 355.9 L345.8 361.8 L346.3 368.1 L346.8 374.3 L347.3 380.2 L347.8 385.5 L348.3 389.9 L348.8 393.4 L349.3 396.5 L349.8 399.2 L350.3 401.8 L350.8 404.2 L351.3 406.4 L351.8 408.5 L352.3 410.6 L352.8 412.6 L353.3 414.7 L353.8 416.8 L354.3 418.8 L354.8 420.7 L355.3 422.7 L355.8 424.5 L356.3 426.4 L356.8 428.1 L357.3 429.9 L357.8 431.6 L358.3 433.2 L358.8 434.8 L359.3 436.4 L359.8 438.0 L360.3 439.5 L360.8 441.0 L361.3 442.4 L361.8 443.9 L362.3 445.3 L362.8 446.6 L363.3 448.0 L363.8 449.3 L364.3 450.6 L364.8 451.8 L365.3 453.0 L365.8 454.1 L370.0 454.2 L375.7 453.6 L376.7 455.6 L377.6 447.8 L379.1 300.0 L380.9 128.9 L381.1 131.6 L381.4 137.2 M401.6 144.7 L401.9 144.7 L402.0 144.9 L440.5 148.0 L441.0 149.5 L442.0 152.3 L443.0 155.1 L444.0 157.9 L445.0 160.7 L446.0 163.4 L447.0 166.2 L448.0 168.9 L449.0 171.6 L450.0 174.3 L451.0 177.0 L452.0 179.6 L453.0 182.3 L454.0 184.9 L455.0 187.5 L456.0 190.1 L457.0 192.7 L458.0 195.2 L459.0 197.8 L460.0 200.3 L461.0 202.8 L462.0 205.2 L463.0 207.7 L464.0 210.1 L465.0 212.5 L466.0 214.9 L467.0 217.3 L468.0 219.6 L469.0 221.9 L470.0 224.2 L471.0 226.5 L472.0 228.7 L473.0 230.9 L474.0 233.1 L475.0 235.3 L476.0 237.4 L477.0 239.5 L478.0 241.6 L479.0 243.7 L480.0 245.7 L481.0 247.7 L482.0 249.6 L483.0 251.6 L484.0 253.5 L485.0 255.4 L486.0 257.2 L487.0 259.0 L488.0 260.8 L489.0 262.6 L490.0 264.3 L491.0 266.0 L492.0 267.7 L493.0 269.3 L494.0 270.9 L495.0 272.4 L496.0 274.0 L497.0 275.5 L498.0 276.9 L499.0 278.4 L500.0 279.7 L501.0 281.1 L502.0 282.4 L503.0 283.7 L504.0 285.0 L505.0 286.2 L506.0 287.4 L507.0 288.5 L508.0 289.6 L509.0 290.7 L510.0 291.8 L511.0 292.8 L512.0 293.7 L513.0 294.7 L514.0 295.6 L515.0 296.4 L516.0 297.2 L517.0 298.0 L518.0 298.8 L519.0 299.5 L520.0 300.1 L521.0 300.8 L522.0 301.3 L523.0 301.9 L524.0 302.4 L525.0 302.9 L526.0 303.3 L527.0 303.7 L528.0 304.1 L529.0 304.4 L530.0 304.7 L531.0 304.9 L532.0 305.2 L533.0 305.3 L534.0 305.4 L535.0 305.5 L536.0 305.6 L537.0 305.6 L538.0 305.6 L539.0 305.5 L540.0 305.4 L541.0 305.3 L542.0 305.1 L543.0 304.9 L544.0 304.6 L545.0 304.4 L546.0 304.0 L547.0 303.7 L548.0 303.3 L549.0 302.8 L550.0 302.4 L551.0 301.9 L552.0 301.3 L553.0 300.7 L554.0 300.1 L555.0 299.5 L556.0 298.8 L557.0 298.1 L558.0 297.3 L559.0 296.5 L560.0 295.7 L561.0 294.8 L562.0 293.9 L563.0 293.0 L564.0 292.0 L565.0 291.0 L566.0 290.0 L567.0 288.9 L568.0 287.8 L569.0 286.6 L570.0 285.5 L571.0 284.2 L572.0 283.0 L573.0 281.7 L574.0 280.4 L575.0 279.1 L576.0 277.7 L577.0 276.3 L578.0 274.8 L579.0 273.4 L580.0 271.9 L581.0 270.3 L582.0 268.8 L583.0 267.2 L584.0 265.5 L585.0 263.9 L586.0 262.2 L587.0 260.5 L588.0 258.7 L589.0 257.0 L590.0 255.2 L591.0 253.3 L592.0 251.5 L593.0 249.6 L594.0 247.7 L595.0 245.7 L596.0 243.7 L597.0 241.8 L598.0 239.7 L599.0 237.7 L600.0 235.6 L601.0 233.5 L602.0 231.4 L603.0 229.2 L604.0 227.1 L605.0 224.9 L606.0 222.7 L607.0 220.4 L608.0 218.2 L609.0 215.9 L610.0 213.6 L611.0 211.3 L612.0 208.9 L613.0 206.5 L614.0 204.2 L615.0 201.7 L616.0 199.3 L617.0 196.9 L618.0 194.4 L619.0 191.9 L620.0 189.4 L621.0 186.9 L622.0 184.4 L623.0 181.9 L624.0 179.3 L625.0 176.7 L626.0 174.1 L627.0 171.5 L628.0 168.9 L629.0 166.3 L630.0 163.6 L631.0 161.0 L632.0 158.3 L633.2 155.1 L660.0 157.9 L660.8 158.7 L726.2 164.5 L727.0 165.3 L752.0 167.6 L752.0 167.6 L752.2 167.4 L752.4 167.3 L752.6 167.3 M759.0 160.8 L759.2 157.3 L759.2 155.9 L759.9 178.0 L760.6 300.0 L761.8 494.6 L762.0 489.3 L762.3 478.9 L762.5 466.8 M799.5 464.1 L799.8 464.1 L800.0 464.1 L800.8 461.6 L870.3 456.7 L873.2 455.1 L930.4 450.4 L931.4 448.4 L932.4 446.6 L933.4 444.7 L934.4 442.9 L935.4 441.1 L936.4 439.3 L937.4 437.5 L938.4 435.7 L939.4 433.9 L940.4 432.2 L941.4 430.4 L942.4 428.7 L943.4 427.0 L944.4 425.3 L945.4 423.6 L946.4 421.9 L947.4 420.2 L948.4 418.5 L949.4 416.8 L950.4 415.2 L951.4 413.5 L952.4 411.9 L953.4 410.3 L954.4 408.6 L955.4 407.0 L956.4 405.4 L957.4 403.8 L958.4 402.1 L959.4 400.5 L960.4 398.9 L961.4 397.3 L962.4 395.7 L963.4 394.1 L964.4 392.6 L965.4 391.0 L966.4 389.4 L967.4 387.8 L968.4 386.3 L969.4 384.7 L970.4 383.2 L971.4 381.7 L972.4 380.1 L973.4 378.6 L974.4 377.1 L975.4 375.6 L976.4 374.1 L977.4 372.6 L978.4 371.2 L979.4 369.8 L980.4 368.3 L981.4 366.9 L982.4 365.5 L983.4 364.1 L984.4 362.7 L985.4 361.3 L986.4 359.9 L987.4 358.5 L988.4 357.1 L989.4 355.8 L990.4 354.4 L991.4 353.1 L992.4 351.7 L993.4 350.4 L994.4 349.1 L995.4 347.8 L996.4 346.5 L997.4 345.3 L998.4 344.0 L999.4 342.8 L1000.4 341.6 L1001.4 340.4 L1002.4 339.2 L1003.4 338.1 L1004.4 336.9 L1005.4 335.8 L1006.4 334.7 L1007.4 333.6 L1008.4 332.6 L1009.4 331.5 L1010.4 330.5 L1011.4 329.4 L1012.4 328.4 L1013.4 327.4 L1014.4 326.5 L1015.4 325.5 L1016.4 324.6 L1017.4 323.7 L1018.4 322.8 L1019.4 321.9 L1020.4 321.0 L1021.4 320.1 L1022.4 319.3 L1023.4 318.4 L1024.4 317.6 L1025.4 316.8 L1026.4 316.0 L1027.4 315.3 L1028.4 314.5 L1029.4 313.8 L1030.4 313.1 L1031.4 312.4 L1032.4 311.7 L1033.4 311.0 L1034.4 310.4 L1035.4 309.7 L1036.4 309.1 L1037.4 308.5 L1038.4 307.9 L1039.4 307.3 L1040.4 306.7 L1041.4 306.2 L1042.4 305.7 L1043.4 305.2 L1044.4 304.7 L1045.4 304.2 L1046.4 303.8 L1047.4 303.4 L1048.4 303.0 L1049.4 302.6 L1050.4 302.2 L1051.4 301.9 L1052.4 301.5 L1053.4 301.3 L1054.4 301.0 L1055.4 300.8 L1056.4 300.6 L1057.4 300.4 L1058.4 300.2 L1059.4 300.1 L1060.4 299.9 L1061.4 299.8 L1062.4 299.7 L1063.4 299.6 L1064.4 299.5 L1065.4 299.4 L1066.4 299.4 L1067.4 299.4 L1068.4 299.5 L1069.4 299.5 L1070.4 299.6 L1071.4 299.8 L1072.4 299.9 L1073.4 300.0 L1074.4 300.2 L1075.4 300.4 L1076.4 300.6 L1077.4 300.8 L1078.4 301.1 L1079.4 301.4 L1080.4 301.7 L1081.4 302.1 L1082.4 302.5 L1083.4 302.8 L1084.4 303.2 L1085.4 303.6 L1086.4 304.0 L1087.4 304.4 L1088.4 304.8 L1089.4 305.3 L1090.4 305.7 L1091.4 306.2 L1092.4 306.7 L1093.4 307.3 L1094.4 307.8 L1095.4 308.4 L1096.4 309.0 L1097.4 309.5 L1098.4 310.1 L1099.4 310.8 L1100.4 311.4 L1101.4 312.0 L1102.4 312.6 L1103.4 313.3 L1104.4 314.0 L1105.4 314.7 L1106.4 315.4 L1107.4 316.1 L1108.4 316.9 L1109.4 317.6 L1110.4 318.4 L1111.4 319.2 L1112.4 320.0 L1113.4 320.8 L1114.4 321.6 L1115.4 322.4 L1116.4 323.3 L1117.4 324.1 L1118.4 325.0 L1119.4 326.0 L1120.4 326.9 L1121.4 327.8 L1122.4 328.8 L1123.4 329.8 L1124.4 330.7 L1125.4 331.7 L1126.4 332.7 L1127.4 333.8 L1128.4 334.8 L1129.4 335.8 L1130.4 336.8 L1131.4 337.9 L1132.4 338.9 L1133.4 340.0 L1134.4 341.0 L1135.4 342.1 L1136.4 343.2 L1137.4 344.3 L1138.4 345.4 L1139.4 346.6 L1140.4 347.7 L1141.4 348.9 L1142.4 350.0 L1143.4 351.2 L1144.4 352.4 L1145.4 353.7 L1146.4 354.9 L1147.4 356.2 L1148.4 357.4 L1149.4 358.7 L1150.4 360.0 L1151.4 361.4 L1152.4 362.7 L1153.4 364.0 L1154.4 365.4 L1155.4 366.7 L1156.4 368.1 L1157.4 369.5 L1158.4 370.9 L1159.4 372.2 L1160.4 373.7 L1161.4 375.1 L1162.4 376.5 L1163.4 377.9 L1164.4 379.4 L1165.4 380.9 L1166.4 382.3 L1167.4 383.8 L1168.4 385.3 L1169.4 386.8 L1170.4 388.3 L1171.4 389.7 L1172.4 391.3 L1173.4 392.8 L1174.4 394.3 L1175.4 395.8 L1176.4 397.4 L1177.4 398.9 L1178.4 400.5 L1179.4 402.0 L1180.4 403.6 L1181.4 405.1 L1182.4 406.7 L1183.4 408.3 L1184.4 409.9 L1185.4 411.4 L1186.4 413.0 L1187.4 414.6 L1188.4 416.2 L1189.4 417.8 L1190.4 419.4 L1191.4 421.0 L1192.4 422.7 L1193.4 424.3 L1194.4 425.9 L1195.4 427.5 L1196.4 429.1 L1197.4 430.7 L1198.4 432.3 L1199.4 433.9 L1200.4 435.5 L1201.4 437.0 L1202.6 438.4 L1224.5 436.8 L1226.5 435.3 L1292.9 430.7 L1295.5 429.0 L1366.4 424.7 L1369.0 423.2 L1417.0 420.1 L1417.0 420.2 L1417.2 420.2 L1417.4 420.2 L1417.6 420.2 M1432.4 433.3 L1432.8 438.0 L1433.2 360.0" transform="translate(0,-0.22)"/><path d="M335.5 300.0 L336.6 300.0 L336.8 300.5 L337.3 301.9 L337.8 303.6 L338.3 305.6 L338.8 307.7 L339.3 310.1 L339.8 312.6 L340.3 315.3 L340.8 318.1 L341.3 321.2 L341.8 324.7 L342.3 328.5 L342.8 332.5 L343.3 336.8 L343.8 341.3 L344.3 345.8 L344.8 350.5 L345.3 355.9 L345.8 361.8 L346.3 368.1 L346.8 374.3 L347.3 380.2 L347.8 385.5 L348.3 389.9 L348.8 393.4 L349.3 396.5 L349.8 399.2 L350.3 401.8 L350.8 404.2 L351.3 406.4 L351.8 408.5 L352.3 410.6 L352.8 412.6 L353.3 414.7 L353.8 416.8 L354.3 418.8 L354.8 420.7 L355.3 422.7 L355.8 424.5 L356.3 426.4 L356.8 428.1 L357.3 429.9 L357.8 431.6 L358.3 433.2 L358.8 434.8 L359.3 436.4 L359.8 438.0 L360.3 439.5 L360.8 441.0 L361.3 442.4 L361.8 443.9 L362.3 445.3 L362.8 446.6 L363.3 448.0 L363.8 449.3 L364.3 450.6 L364.8 451.8 L365.3 453.0 L365.8 454.1 L370.0 454.2 L375.7 453.6 L376.7 455.6 L377.6 447.8 L379.1 300.0 L380.9 128.9 L381.1 131.6 L381.4 137.2 M401.6 144.7 L401.9 144.7 L402.0 144.9 L440.5 148.0 L441.0 149.5 L442.0 152.3 L443.0 155.1 L444.0 157.9 L445.0 160.7 L446.0 163.4 L447.0 166.2 L448.0 168.9 L449.0 171.6 L450.0 174.3 L451.0 177.0 L452.0 179.6 L453.0 182.3 L454.0 184.9 L455.0 187.5 L456.0 190.1 L457.0 192.7 L458.0 195.2 L459.0 197.8 L460.0 200.3 L461.0 202.8 L462.0 205.2 L463.0 207.7 L464.0 210.1 L465.0 212.5 L466.0 214.9 L467.0 217.3 L468.0 219.6 L469.0 221.9 L470.0 224.2 L471.0 226.5 L472.0 228.7 L473.0 230.9 L474.0 233.1 L475.0 235.3 L476.0 237.4 L477.0 239.5 L478.0 241.6 L479.0 243.7 L480.0 245.7 L481.0 247.7 L482.0 249.6 L483.0 251.6 L484.0 253.5 L485.0 255.4 L486.0 257.2 L487.0 259.0 L488.0 260.8 L489.0 262.6 L490.0 264.3 L491.0 266.0 L492.0 267.7 L493.0 269.3 L494.0 270.9 L495.0 272.4 L496.0 274.0 L497.0 275.5 L498.0 276.9 L499.0 278.4 L500.0 279.7 L501.0 281.1 L502.0 282.4 L503.0 283.7 L504.0 285.0 L505.0 286.2 L506.0 287.4 L507.0 288.5 L508.0 289.6 L509.0 290.7 L510.0 291.8 L511.0 292.8 L512.0 293.7 L513.0 294.7 L514.0 295.6 L515.0 296.4 L516.0 297.2 L517.0 298.0 L518.0 298.8 L519.0 299.5 L520.0 300.1 L521.0 300.8 L522.0 301.3 L523.0 301.9 L524.0 302.4 L525.0 302.9 L526.0 303.3 L527.0 303.7 L528.0 304.1 L529.0 304.4 L530.0 304.7 L531.0 304.9 L532.0 305.2 L533.0 305.3 L534.0 305.4 L535.0 305.5 L536.0 305.6 L537.0 305.6 L538.0 305.6 L539.0 305.5 L540.0 305.4 L541.0 305.3 L542.0 305.1 L543.0 304.9 L544.0 304.6 L545.0 304.4 L546.0 304.0 L547.0 303.7 L548.0 303.3 L549.0 302.8 L550.0 302.4 L551.0 301.9 L552.0 301.3 L553.0 300.7 L554.0 300.1 L555.0 299.5 L556.0 298.8 L557.0 298.1 L558.0 297.3 L559.0 296.5 L560.0 295.7 L561.0 294.8 L562.0 293.9 L563.0 293.0 L564.0 292.0 L565.0 291.0 L566.0 290.0 L567.0 288.9 L568.0 287.8 L569.0 286.6 L570.0 285.5 L571.0 284.2 L572.0 283.0 L573.0 281.7 L574.0 280.4 L575.0 279.1 L576.0 277.7 L577.0 276.3 L578.0 274.8 L579.0 273.4 L580.0 271.9 L581.0 270.3 L582.0 268.8 L583.0 267.2 L584.0 265.5 L585.0 263.9 L586.0 262.2 L587.0 260.5 L588.0 258.7 L589.0 257.0 L590.0 255.2 L591.0 253.3 L592.0 251.5 L593.0 249.6 L594.0 247.7 L595.0 245.7 L596.0 243.7 L597.0 241.8 L598.0 239.7 L599.0 237.7 L600.0 235.6 L601.0 233.5 L602.0 231.4 L603.0 229.2 L604.0 227.1 L605.0 224.9 L606.0 222.7 L607.0 220.4 L608.0 218.2 L609.0 215.9 L610.0 213.6 L611.0 211.3 L612.0 208.9 L613.0 206.5 L614.0 204.2 L615.0 201.7 L616.0 199.3 L617.0 196.9 L618.0 194.4 L619.0 191.9 L620.0 189.4 L621.0 186.9 L622.0 184.4 L623.0 181.9 L624.0 179.3 L625.0 176.7 L626.0 174.1 L627.0 171.5 L628.0 168.9 L629.0 166.3 L630.0 163.6 L631.0 161.0 L632.0 158.3 L633.2 155.1 L660.0 157.9 L660.8 158.7 L726.2 164.5 L727.0 165.3 L752.0 167.6 L752.0 167.6 L752.2 167.4 L752.4 167.3 L752.6 167.3 M759.0 160.8 L759.2 157.3 L759.2 155.9 L759.9 178.0 L760.6 300.0 L761.8 494.6 L762.0 489.3 L762.3 478.9 L762.5 466.8 M799.5 464.1 L799.8 464.1 L800.0 464.1 L800.8 461.6 L870.3 456.7 L873.2 455.1 L930.4 450.4 L931.4 448.4 L932.4 446.6 L933.4 444.7 L934.4 442.9 L935.4 441.1 L936.4 439.3 L937.4 437.5 L938.4 435.7 L939.4 433.9 L940.4 432.2 L941.4 430.4 L942.4 428.7 L943.4 427.0 L944.4 425.3 L945.4 423.6 L946.4 421.9 L947.4 420.2 L948.4 418.5 L949.4 416.8 L950.4 415.2 L951.4 413.5 L952.4 411.9 L953.4 410.3 L954.4 408.6 L955.4 407.0 L956.4 405.4 L957.4 403.8 L958.4 402.1 L959.4 400.5 L960.4 398.9 L961.4 397.3 L962.4 395.7 L963.4 394.1 L964.4 392.6 L965.4 391.0 L966.4 389.4 L967.4 387.8 L968.4 386.3 L969.4 384.7 L970.4 383.2 L971.4 381.7 L972.4 380.1 L973.4 378.6 L974.4 377.1 L975.4 375.6 L976.4 374.1 L977.4 372.6 L978.4 371.2 L979.4 369.8 L980.4 368.3 L981.4 366.9 L982.4 365.5 L983.4 364.1 L984.4 362.7 L985.4 361.3 L986.4 359.9 L987.4 358.5 L988.4 357.1 L989.4 355.8 L990.4 354.4 L991.4 353.1 L992.4 351.7 L993.4 350.4 L994.4 349.1 L995.4 347.8 L996.4 346.5 L997.4 345.3 L998.4 344.0 L999.4 342.8 L1000.4 341.6 L1001.4 340.4 L1002.4 339.2 L1003.4 338.1 L1004.4 336.9 L1005.4 335.8 L1006.4 334.7 L1007.4 333.6 L1008.4 332.6 L1009.4 331.5 L1010.4 330.5 L1011.4 329.4 L1012.4 328.4 L1013.4 327.4 L1014.4 326.5 L1015.4 325.5 L1016.4 324.6 L1017.4 323.7 L1018.4 322.8 L1019.4 321.9 L1020.4 321.0 L1021.4 320.1 L1022.4 319.3 L1023.4 318.4 L1024.4 317.6 L1025.4 316.8 L1026.4 316.0 L1027.4 315.3 L1028.4 314.5 L1029.4 313.8 L1030.4 313.1 L1031.4 312.4 L1032.4 311.7 L1033.4 311.0 L1034.4 310.4 L1035.4 309.7 L1036.4 309.1 L1037.4 308.5 L1038.4 307.9 L1039.4 307.3 L1040.4 306.7 L1041.4 306.2 L1042.4 305.7 L1043.4 305.2 L1044.4 304.7 L1045.4 304.2 L1046.4 303.8 L1047.4 303.4 L1048.4 303.0 L1049.4 302.6 L1050.4 302.2 L1051.4 301.9 L1052.4 301.5 L1053.4 301.3 L1054.4 301.0 L1055.4 300.8 L1056.4 300.6 L1057.4 300.4 L1058.4 300.2 L1059.4 300.1 L1060.4 299.9 L1061.4 299.8 L1062.4 299.7 L1063.4 299.6 L1064.4 299.5 L1065.4 299.4 L1066.4 299.4 L1067.4 299.4 L1068.4 299.5 L1069.4 299.5 L1070.4 299.6 L1071.4 299.8 L1072.4 299.9 L1073.4 300.0 L1074.4 300.2 L1075.4 300.4 L1076.4 300.6 L1077.4 300.8 L1078.4 301.1 L1079.4 301.4 L1080.4 301.7 L1081.4 302.1 L1082.4 302.5 L1083.4 302.8 L1084.4 303.2 L1085.4 303.6 L1086.4 304.0 L1087.4 304.4 L1088.4 304.8 L1089.4 305.3 L1090.4 305.7 L1091.4 306.2 L1092.4 306.7 L1093.4 307.3 L1094.4 307.8 L1095.4 308.4 L1096.4 309.0 L1097.4 309.5 L1098.4 310.1 L1099.4 310.8 L1100.4 311.4 L1101.4 312.0 L1102.4 312.6 L1103.4 313.3 L1104.4 314.0 L1105.4 314.7 L1106.4 315.4 L1107.4 316.1 L1108.4 316.9 L1109.4 317.6 L1110.4 318.4 L1111.4 319.2 L1112.4 320.0 L1113.4 320.8 L1114.4 321.6 L1115.4 322.4 L1116.4 323.3 L1117.4 324.1 L1118.4 325.0 L1119.4 326.0 L1120.4 326.9 L1121.4 327.8 L1122.4 328.8 L1123.4 329.8 L1124.4 330.7 L1125.4 331.7 L1126.4 332.7 L1127.4 333.8 L1128.4 334.8 L1129.4 335.8 L1130.4 336.8 L1131.4 337.9 L1132.4 338.9 L1133.4 340.0 L1134.4 341.0 L1135.4 342.1 L1136.4 343.2 L1137.4 344.3 L1138.4 345.4 L1139.4 346.6 L1140.4 347.7 L1141.4 348.9 L1142.4 350.0 L1143.4 351.2 L1144.4 352.4 L1145.4 353.7 L1146.4 354.9 L1147.4 356.2 L1148.4 357.4 L1149.4 358.7 L1150.4 360.0 L1151.4 361.4 L1152.4 362.7 L1153.4 364.0 L1154.4 365.4 L1155.4 366.7 L1156.4 368.1 L1157.4 369.5 L1158.4 370.9 L1159.4 372.2 L1160.4 373.7 L1161.4 375.1 L1162.4 376.5 L1163.4 377.9 L1164.4 379.4 L1165.4 380.9 L1166.4 382.3 L1167.4 383.8 L1168.4 385.3 L1169.4 386.8 L1170.4 388.3 L1171.4 389.7 L1172.4 391.3 L1173.4 392.8 L1174.4 394.3 L1175.4 395.8 L1176.4 397.4 L1177.4 398.9 L1178.4 400.5 L1179.4 402.0 L1180.4 403.6 L1181.4 405.1 L1182.4 406.7 L1183.4 408.3 L1184.4 409.9 L1185.4 411.4 L1186.4 413.0 L1187.4 414.6 L1188.4 416.2 L1189.4 417.8 L1190.4 419.4 L1191.4 421.0 L1192.4 422.7 L1193.4 424.3 L1194.4 425.9 L1195.4 427.5 L1196.4 429.1 L1197.4 430.7 L1198.4 432.3 L1199.4 433.9 L1200.4 435.5 L1201.4 437.0 L1202.6 438.4 L1224.5 436.8 L1226.5 435.3 L1292.9 430.7 L1295.5 429.0 L1366.4 424.7 L1369.0 423.2 L1417.0 420.1 L1417.0 420.2 L1417.2 420.2 L1417.4 420.2 L1417.6 420.2 M1432.4 433.3 L1432.8 438.0 L1433.2 360.0" transform="translate(0,0.22)"/><path d="M381.4 137.2 L381.6 143.3 L381.9 148.5 L382.1 151.5 L382.4 152.0 L382.6 150.3 L382.9 147.1 L383.1 143.5 L383.4 140.3 L383.6 138.4 L383.9 138.0 L384.1 139.0 L384.4 141.1 L384.6 143.6 L384.9 145.8 L385.1 147.2 L385.4 147.5 L385.6 146.9 L385.9 145.4 L386.1 143.7 L386.4 142.1 L386.6 141.1 L386.9 140.8 L387.1 141.4 L387.4 142.5 L387.6 143.8 L387.9 145.0 L388.1 145.8 L388.4 146.1 L388.6 145.7 L388.9 144.9 L389.1 143.9 L389.4 143.0 L389.6 142.4 L389.9 142.3 L390.1 142.6 L390.4 143.2 L390.6 144.0 L390.9 144.8 L391.1 145.3 L391.4 145.4 L391.6 145.2 L391.9 144.7 L392.1 144.1 L392.4 143.6 L392.6 143.3 L392.9 143.2 L393.1 143.4 L393.4 143.8 L393.6 144.3 L393.9 144.7 L394.1 145.0 L394.4 145.1 L394.6 145.0 L394.9 144.7 L395.1 144.4 L395.4 144.1 L395.6 143.9 L395.9 143.8 L396.1 143.9 L396.4 144.2 L396.6 144.5 L396.9 144.8 L397.1 145.0 L397.4 145.0 L397.6 145.0 L397.9 144.8 L398.1 144.6 L398.4 144.4 L398.6 144.3 L398.9 144.3 L399.1 144.4 L399.4 144.5 L399.6 144.7 L399.9 144.9 L400.1 145.0 L400.4 145.1 L400.6 145.0 L400.9 144.9 L401.1 144.8 L401.4 144.7 L401.6 144.7 M752.6 167.3 L752.8 167.6 L753.0 167.9 L753.2 168.1 L753.4 168.1 L753.6 167.8 L753.8 167.3 L754.0 166.9 L754.2 166.9 L754.4 167.2 L754.6 168.0 L754.8 168.7 L755.0 169.0 L755.2 168.6 L755.4 167.6 L755.6 166.4 L755.8 165.8 L756.0 166.2 L756.2 167.5 L756.4 169.3 L756.6 170.6 L756.8 170.4 L757.0 168.7 L757.2 166.0 L757.4 163.8 L757.6 163.4 L757.8 165.4 L758.0 169.4 L758.2 173.2 L758.4 174.7 L758.6 172.5 L758.8 167.0 L759.0 160.8 M762.5 466.8 L762.8 456.0 L763.0 449.1 L763.3 447.3 L763.5 450.2 L763.8 456.8 L764.0 464.9 L764.3 472.4 L764.5 477.5 L764.8 479.3 L765.0 477.6 L765.3 473.2 L765.5 467.5 L765.8 461.9 L766.0 457.8 L766.3 456.1 L766.5 457.0 L766.8 460.1 L767.0 464.3 L767.3 468.7 L767.5 472.0 L767.8 473.6 L768.0 473.1 L768.3 470.8 L768.5 467.5 L768.8 463.9 L769.0 461.1 L769.3 459.6 L769.5 459.8 L769.8 461.4 L770.0 464.1 L770.3 467.1 L770.5 469.5 L770.8 470.9 L771.0 470.8 L771.3 469.5 L771.5 467.3 L771.8 464.8 L772.0 462.6 L772.3 461.3 L772.5 461.1 L772.8 462.1 L773.0 463.9 L773.3 466.1 L773.5 468.1 L773.8 469.4 L774.0 469.7 L774.3 468.9 L774.5 467.3 L774.8 465.2 L775.0 463.2 L775.3 461.8 L775.5 461.3 L775.8 461.9 L776.0 463.4 L776.3 465.5 L776.5 467.7 L776.8 469.3 L777.0 470.0 L777.3 469.5 L777.5 467.8 L777.8 465.5 L778.0 462.9 L778.3 460.9 L778.5 460.0 L778.8 460.5 L779.0 462.2 L779.3 464.8 L779.5 467.6 L779.8 469.7 L780.0 470.7 L780.3 470.2 L780.5 468.4 L780.8 465.8 L781.0 463.2 L781.3 461.2 L781.5 460.3 L781.8 460.6 L782.0 462.2 L782.3 464.3 L782.5 466.4 L782.8 468.1 L783.0 468.7 L783.3 468.4 L783.5 467.3 L783.8 465.7 L784.0 464.2 L784.3 463.0 L784.5 462.4 L784.8 462.6 L785.0 463.3 L785.3 464.3 L785.5 465.4 L785.8 466.2 L786.0 466.6 L786.3 466.5 L786.5 466.1 L786.8 465.3 L787.0 464.6 L787.3 463.9 L787.5 463.5 L787.8 463.5 L788.0 463.8 L788.3 464.3 L788.5 464.9 L788.8 465.4 L789.0 465.6 L789.3 465.6 L789.5 465.4 L789.8 465.0 L790.0 464.6 L790.3 464.2 L790.5 464.0 L790.8 463.9 L791.0 464.0 L791.3 464.3 L791.5 464.6 L791.8 464.9 L792.0 465.0 L792.3 465.1 L792.5 464.9 L792.8 464.7 L793.0 464.5 L793.3 464.3 L793.5 464.1 L793.8 464.1 L794.0 464.1 L794.3 464.2 L794.5 464.4 L794.8 464.5 L795.0 464.6 L795.3 464.6 L795.5 464.6 L795.8 464.5 L796.0 464.4 L796.3 464.2 L796.5 464.2 L796.8 464.1 L797.0 464.2 L797.3 464.2 L797.5 464.2 L797.8 464.3 L798.0 464.3 L798.3 464.3 L798.5 464.2 L798.8 464.2 L799.0 464.2 L799.3 464.1 L799.5 464.1 M1417.6 420.2 L1417.8 420.2 L1418.0 420.1 L1418.2 420.0 L1418.4 419.9 L1418.6 419.9 L1418.8 419.8 L1419.0 419.8 L1419.2 419.8 L1419.4 419.9 L1419.6 419.9 L1419.8 420.0 L1420.0 420.1 L1420.2 420.2 L1420.4 420.3 L1420.6 420.2 L1420.8 420.2 L1421.0 420.0 L1421.2 419.8 L1421.4 419.7 L1421.6 419.5 L1421.8 419.4 L1422.0 419.3 L1422.2 419.4 L1422.4 419.5 L1422.6 419.8 L1422.8 420.0 L1423.0 420.3 L1423.2 420.5 L1423.4 420.6 L1423.6 420.6 L1423.8 420.4 L1424.0 420.1 L1424.2 419.6 L1424.4 419.2 L1424.6 418.7 L1424.8 418.4 L1425.0 418.3 L1425.2 418.5 L1425.4 418.9 L1425.6 419.5 L1425.8 420.2 L1426.0 420.9 L1426.2 421.5 L1426.4 421.8 L1426.6 421.7 L1426.8 421.2 L1427.0 420.4 L1427.2 419.3 L1427.4 418.1 L1427.6 417.0 L1427.8 416.3 L1428.0 416.1 L1428.2 416.5 L1428.4 417.5 L1428.6 419.1 L1428.8 420.9 L1429.0 422.7 L1429.2 424.2 L1429.4 425.0 L1429.6 424.8 L1429.8 423.6 L1430.0 421.5 L1430.2 418.7 L1430.4 415.7 L1430.6 413.0 L1430.8 411.1 L1431.0 410.6 L1431.2 411.6 L1431.4 414.3 L1431.6 418.2 L1431.8 422.9 L1432.0 427.6 L1432.2 431.4 L1432.4 433.3" stroke-width="1.45"/></g><g fill="none" stroke="#54e2a4" stroke-width="1.72" stroke-linejoin="round" stroke-linecap="round"><path d="M335.5 720.0 L336.6 720.0 L336.8 720.5 L337.3 721.9 L337.8 723.6 L338.3 725.6 L338.8 727.8 L339.3 730.2 L339.8 732.7 L340.3 735.4 L340.8 738.3 L341.3 741.4 L341.8 744.9 L342.3 748.8 L342.8 752.9 L343.3 757.2 L343.8 761.7 L344.3 766.3 L344.8 771.1 L345.3 776.5 L345.8 782.5 L346.3 788.8 L346.8 795.1 L347.3 801.0 L347.8 806.4 L348.3 810.9 L348.8 814.4 L349.3 817.5 L349.8 820.3 L350.3 822.9 L350.8 825.3 L351.3 827.6 L351.8 829.7 L352.3 831.8 L352.8 833.8 L353.3 835.9 L353.8 838.0 L354.3 840.1 L354.8 842.0 L355.3 844.0 L355.8 845.9 L356.3 847.7 L356.8 849.5 L357.3 851.3 L357.8 853.0 L358.3 854.7 L358.8 856.3 L359.3 857.9 L359.8 859.4 L360.3 861.0 L360.8 862.5 L361.3 864.0 L361.8 865.4 L362.3 866.8 L362.8 868.2 L363.3 869.6 L363.8 870.9 L364.3 872.2 L364.8 873.4 L365.3 874.6 L365.8 875.8 L370.0 875.9 L375.7 875.3 L376.7 877.3 L377.6 869.4 L379.1 720.0 L380.9 547.0 L381.1 549.8 L381.4 555.4 M401.6 563.0 L401.9 563.0 L402.0 563.2 L440.5 566.4 L441.0 567.9 L442.0 570.7 L443.0 573.6 L444.0 576.4 L445.0 579.2 L446.0 581.9 L447.0 584.7 L448.0 587.5 L449.0 590.2 L450.0 592.9 L451.0 595.6 L452.0 598.3 L453.0 601.0 L454.0 603.7 L455.0 606.3 L456.0 608.9 L457.0 611.5 L458.0 614.1 L459.0 616.7 L460.0 619.2 L461.0 621.7 L462.0 624.2 L463.0 626.7 L464.0 629.1 L465.0 631.6 L466.0 634.0 L467.0 636.4 L468.0 638.7 L469.0 641.1 L470.0 643.4 L471.0 645.7 L472.0 647.9 L473.0 650.2 L474.0 652.4 L475.0 654.6 L476.0 656.7 L477.0 658.9 L478.0 661.0 L479.0 663.0 L480.0 665.1 L481.0 667.1 L482.0 669.1 L483.0 671.0 L484.0 673.0 L485.0 674.9 L486.0 676.7 L487.0 678.6 L488.0 680.4 L489.0 682.2 L490.0 683.9 L491.0 685.6 L492.0 687.3 L493.0 688.9 L494.0 690.6 L495.0 692.1 L496.0 693.7 L497.0 695.2 L498.0 696.7 L499.0 698.1 L500.0 699.5 L501.0 700.9 L502.0 702.2 L503.0 703.5 L504.0 704.8 L505.0 706.0 L506.0 707.2 L507.0 708.4 L508.0 709.5 L509.0 710.6 L510.0 711.7 L511.0 712.7 L512.0 713.7 L513.0 714.6 L514.0 715.5 L515.0 716.4 L516.0 717.2 L517.0 718.0 L518.0 718.7 L519.0 719.4 L520.0 720.1 L521.0 720.8 L522.0 721.4 L523.0 721.9 L524.0 722.4 L525.0 722.9 L526.0 723.4 L527.0 723.8 L528.0 724.1 L529.0 724.5 L530.0 724.7 L531.0 725.0 L532.0 725.2 L533.0 725.4 L534.0 725.5 L535.0 725.6 L536.0 725.6 L537.0 725.7 L538.0 725.6 L539.0 725.6 L540.0 725.5 L541.0 725.3 L542.0 725.1 L543.0 724.9 L544.0 724.7 L545.0 724.4 L546.0 724.1 L547.0 723.7 L548.0 723.3 L549.0 722.9 L550.0 722.4 L551.0 721.9 L552.0 721.3 L553.0 720.7 L554.0 720.1 L555.0 719.5 L556.0 718.8 L557.0 718.0 L558.0 717.3 L559.0 716.5 L560.0 715.6 L561.0 714.8 L562.0 713.8 L563.0 712.9 L564.0 711.9 L565.0 710.9 L566.0 709.8 L567.0 708.8 L568.0 707.6 L569.0 706.5 L570.0 705.3 L571.0 704.1 L572.0 702.8 L573.0 701.5 L574.0 700.2 L575.0 698.8 L576.0 697.4 L577.0 696.0 L578.0 694.6 L579.0 693.1 L580.0 691.6 L581.0 690.0 L582.0 688.4 L583.0 686.8 L584.0 685.2 L585.0 683.5 L586.0 681.8 L587.0 680.0 L588.0 678.3 L589.0 676.5 L590.0 674.7 L591.0 672.8 L592.0 670.9 L593.0 669.0 L594.0 667.1 L595.0 665.1 L596.0 663.1 L597.0 661.1 L598.0 659.1 L599.0 657.0 L600.0 654.9 L601.0 652.8 L602.0 650.6 L603.0 648.5 L604.0 646.3 L605.0 644.1 L606.0 641.8 L607.0 639.6 L608.0 637.3 L609.0 635.0 L610.0 632.6 L611.0 630.3 L612.0 627.9 L613.0 625.5 L614.0 623.1 L615.0 620.7 L616.0 618.2 L617.0 615.8 L618.0 613.3 L619.0 610.8 L620.0 608.2 L621.0 605.7 L622.0 603.1 L623.0 600.6 L624.0 598.0 L625.0 595.4 L626.0 592.8 L627.0 590.1 L628.0 587.5 L629.0 584.8 L630.0 582.1 L631.0 579.5 L632.0 576.8 L633.2 573.5 L660.0 576.4 L660.8 577.2 L726.2 583.0 L727.0 583.8 L752.0 586.2 L752.0 586.1 L752.2 585.9 L752.4 585.8 L752.6 585.9 M759.0 579.3 L759.2 575.8 L759.2 574.3 L759.9 596.7 L760.6 720.0 L761.8 916.7 L762.0 911.3 L762.3 900.8 L762.5 888.6 M799.5 885.9 L799.8 885.9 L800.0 885.9 L800.8 883.3 L870.3 878.1 L873.2 876.5 L930.4 871.5 L931.4 869.5 L932.4 867.6 L933.4 865.8 L934.4 863.9 L935.4 862.1 L936.4 860.3 L937.4 858.5 L938.4 856.7 L939.4 854.9 L940.4 853.1 L941.4 851.3 L942.4 849.6 L943.4 847.8 L944.4 846.1 L945.4 844.4 L946.4 842.7 L947.4 841.0 L948.4 839.3 L949.4 837.6 L950.4 836.0 L951.4 834.3 L952.4 832.6 L953.4 831.0 L954.4 829.3 L955.4 827.7 L956.4 826.1 L957.4 824.4 L958.4 822.8 L959.4 821.2 L960.4 819.6 L961.4 818.0 L962.4 816.3 L963.4 814.7 L964.4 813.1 L965.4 811.6 L966.4 810.0 L967.4 808.4 L968.4 806.8 L969.4 805.3 L970.4 803.7 L971.4 802.2 L972.4 800.6 L973.4 799.1 L974.4 797.6 L975.4 796.1 L976.4 794.6 L977.4 793.1 L978.4 791.6 L979.4 790.2 L980.4 788.7 L981.4 787.3 L982.4 785.9 L983.4 784.4 L984.4 783.0 L985.4 781.6 L986.4 780.2 L987.4 778.8 L988.4 777.4 L989.4 776.1 L990.4 774.7 L991.4 773.4 L992.4 772.0 L993.4 770.7 L994.4 769.4 L995.4 768.1 L996.4 766.8 L997.4 765.5 L998.4 764.3 L999.4 763.0 L1000.4 761.8 L1001.4 760.6 L1002.4 759.4 L1003.4 758.3 L1004.4 757.1 L1005.4 756.0 L1006.4 754.9 L1007.4 753.8 L1008.4 752.7 L1009.4 751.7 L1010.4 750.6 L1011.4 749.6 L1012.4 748.6 L1013.4 747.6 L1014.4 746.6 L1015.4 745.6 L1016.4 744.7 L1017.4 743.8 L1018.4 742.9 L1019.4 742.0 L1020.4 741.1 L1021.4 740.2 L1022.4 739.3 L1023.4 738.5 L1024.4 737.7 L1025.4 736.9 L1026.4 736.1 L1027.4 735.3 L1028.4 734.6 L1029.4 733.8 L1030.4 733.1 L1031.4 732.4 L1032.4 731.7 L1033.4 731.1 L1034.4 730.4 L1035.4 729.8 L1036.4 729.1 L1037.4 728.5 L1038.4 727.9 L1039.4 727.3 L1040.4 726.8 L1041.4 726.2 L1042.4 725.7 L1043.4 725.2 L1044.4 724.7 L1045.4 724.3 L1046.4 723.8 L1047.4 723.4 L1048.4 723.0 L1049.4 722.6 L1050.4 722.2 L1051.4 721.9 L1052.4 721.5 L1053.4 721.3 L1054.4 721.0 L1055.4 720.8 L1056.4 720.6 L1057.4 720.4 L1058.4 720.2 L1059.4 720.1 L1060.4 719.9 L1061.4 719.8 L1062.4 719.7 L1063.4 719.6 L1064.4 719.5 L1065.4 719.4 L1066.4 719.4 L1067.4 719.4 L1068.4 719.4 L1069.4 719.5 L1070.4 719.6 L1071.4 719.7 L1072.4 719.9 L1073.4 720.0 L1074.4 720.2 L1075.4 720.4 L1076.4 720.6 L1077.4 720.8 L1078.4 721.1 L1079.4 721.4 L1080.4 721.7 L1081.4 722.1 L1082.4 722.5 L1083.4 722.8 L1084.4 723.2 L1085.4 723.6 L1086.4 724.0 L1087.4 724.4 L1088.4 724.9 L1089.4 725.3 L1090.4 725.8 L1091.4 726.2 L1092.4 726.8 L1093.4 727.3 L1094.4 727.8 L1095.4 728.4 L1096.4 729.0 L1097.4 729.6 L1098.4 730.2 L1099.4 730.8 L1100.4 731.4 L1101.4 732.0 L1102.4 732.7 L1103.4 733.3 L1104.4 734.0 L1105.4 734.7 L1106.4 735.4 L1107.4 736.1 L1108.4 736.9 L1109.4 737.7 L1110.4 738.4 L1111.4 739.2 L1112.4 740.0 L1113.4 740.8 L1114.4 741.6 L1115.4 742.5 L1116.4 743.3 L1117.4 744.2 L1118.4 745.1 L1119.4 746.0 L1120.4 746.9 L1121.4 747.9 L1122.4 748.8 L1123.4 749.8 L1124.4 750.8 L1125.4 751.8 L1126.4 752.8 L1127.4 753.8 L1128.4 754.8 L1129.4 755.9 L1130.4 756.9 L1131.4 757.9 L1132.4 759.0 L1133.4 760.0 L1134.4 761.1 L1135.4 762.2 L1136.4 763.3 L1137.4 764.4 L1138.4 765.5 L1139.4 766.6 L1140.4 767.8 L1141.4 768.9 L1142.4 770.1 L1143.4 771.3 L1144.4 772.5 L1145.4 773.7 L1146.4 775.0 L1147.4 776.2 L1148.4 777.5 L1149.4 778.8 L1150.4 780.1 L1151.4 781.4 L1152.4 782.8 L1153.4 784.1 L1154.4 785.5 L1155.4 786.8 L1156.4 788.2 L1157.4 789.6 L1158.4 790.9 L1159.4 792.3 L1160.4 793.7 L1161.4 795.2 L1162.4 796.6 L1163.4 798.0 L1164.4 799.5 L1165.4 800.9 L1166.4 802.4 L1167.4 803.9 L1168.4 805.4 L1169.4 806.8 L1170.4 808.3 L1171.4 809.8 L1172.4 811.3 L1173.4 812.8 L1174.4 814.4 L1175.4 815.9 L1176.4 817.4 L1177.4 819.0 L1178.4 820.5 L1179.4 822.1 L1180.4 823.6 L1181.4 825.2 L1182.4 826.8 L1183.4 828.3 L1184.4 829.9 L1185.4 831.5 L1186.4 833.1 L1187.4 834.6 L1188.4 836.2 L1189.4 837.8 L1190.4 839.5 L1191.4 841.1 L1192.4 842.7 L1193.4 844.3 L1194.4 845.9 L1195.4 847.5 L1196.4 849.1 L1197.4 850.7 L1198.4 852.3 L1199.4 853.9 L1200.4 855.5 L1201.4 857.0 L1202.6 858.4 L1224.5 856.8 L1226.5 855.3 L1292.9 850.7 L1295.5 849.0 L1366.4 844.7 L1369.0 843.2 L1417.0 840.1 L1417.0 840.2 L1417.2 840.2 L1417.4 840.2 L1417.6 840.2 M1432.4 853.3 L1432.8 858.0 L1433.2 780.0" transform="translate(0,-0.22)"/><path d="M335.5 720.0 L336.6 720.0 L336.8 720.5 L337.3 721.9 L337.8 723.6 L338.3 725.6 L338.8 727.8 L339.3 730.2 L339.8 732.7 L340.3 735.4 L340.8 738.3 L341.3 741.4 L341.8 744.9 L342.3 748.8 L342.8 752.9 L343.3 757.2 L343.8 761.7 L344.3 766.3 L344.8 771.1 L345.3 776.5 L345.8 782.5 L346.3 788.8 L346.8 795.1 L347.3 801.0 L347.8 806.4 L348.3 810.9 L348.8 814.4 L349.3 817.5 L349.8 820.3 L350.3 822.9 L350.8 825.3 L351.3 827.6 L351.8 829.7 L352.3 831.8 L352.8 833.8 L353.3 835.9 L353.8 838.0 L354.3 840.1 L354.8 842.0 L355.3 844.0 L355.8 845.9 L356.3 847.7 L356.8 849.5 L357.3 851.3 L357.8 853.0 L358.3 854.7 L358.8 856.3 L359.3 857.9 L359.8 859.4 L360.3 861.0 L360.8 862.5 L361.3 864.0 L361.8 865.4 L362.3 866.8 L362.8 868.2 L363.3 869.6 L363.8 870.9 L364.3 872.2 L364.8 873.4 L365.3 874.6 L365.8 875.8 L370.0 875.9 L375.7 875.3 L376.7 877.3 L377.6 869.4 L379.1 720.0 L380.9 547.0 L381.1 549.8 L381.4 555.4 M401.6 563.0 L401.9 563.0 L402.0 563.2 L440.5 566.4 L441.0 567.9 L442.0 570.7 L443.0 573.6 L444.0 576.4 L445.0 579.2 L446.0 581.9 L447.0 584.7 L448.0 587.5 L449.0 590.2 L450.0 592.9 L451.0 595.6 L452.0 598.3 L453.0 601.0 L454.0 603.7 L455.0 606.3 L456.0 608.9 L457.0 611.5 L458.0 614.1 L459.0 616.7 L460.0 619.2 L461.0 621.7 L462.0 624.2 L463.0 626.7 L464.0 629.1 L465.0 631.6 L466.0 634.0 L467.0 636.4 L468.0 638.7 L469.0 641.1 L470.0 643.4 L471.0 645.7 L472.0 647.9 L473.0 650.2 L474.0 652.4 L475.0 654.6 L476.0 656.7 L477.0 658.9 L478.0 661.0 L479.0 663.0 L480.0 665.1 L481.0 667.1 L482.0 669.1 L483.0 671.0 L484.0 673.0 L485.0 674.9 L486.0 676.7 L487.0 678.6 L488.0 680.4 L489.0 682.2 L490.0 683.9 L491.0 685.6 L492.0 687.3 L493.0 688.9 L494.0 690.6 L495.0 692.1 L496.0 693.7 L497.0 695.2 L498.0 696.7 L499.0 698.1 L500.0 699.5 L501.0 700.9 L502.0 702.2 L503.0 703.5 L504.0 704.8 L505.0 706.0 L506.0 707.2 L507.0 708.4 L508.0 709.5 L509.0 710.6 L510.0 711.7 L511.0 712.7 L512.0 713.7 L513.0 714.6 L514.0 715.5 L515.0 716.4 L516.0 717.2 L517.0 718.0 L518.0 718.7 L519.0 719.4 L520.0 720.1 L521.0 720.8 L522.0 721.4 L523.0 721.9 L524.0 722.4 L525.0 722.9 L526.0 723.4 L527.0 723.8 L528.0 724.1 L529.0 724.5 L530.0 724.7 L531.0 725.0 L532.0 725.2 L533.0 725.4 L534.0 725.5 L535.0 725.6 L536.0 725.6 L537.0 725.7 L538.0 725.6 L539.0 725.6 L540.0 725.5 L541.0 725.3 L542.0 725.1 L543.0 724.9 L544.0 724.7 L545.0 724.4 L546.0 724.1 L547.0 723.7 L548.0 723.3 L549.0 722.9 L550.0 722.4 L551.0 721.9 L552.0 721.3 L553.0 720.7 L554.0 720.1 L555.0 719.5 L556.0 718.8 L557.0 718.0 L558.0 717.3 L559.0 716.5 L560.0 715.6 L561.0 714.8 L562.0 713.8 L563.0 712.9 L564.0 711.9 L565.0 710.9 L566.0 709.8 L567.0 708.8 L568.0 707.6 L569.0 706.5 L570.0 705.3 L571.0 704.1 L572.0 702.8 L573.0 701.5 L574.0 700.2 L575.0 698.8 L576.0 697.4 L577.0 696.0 L578.0 694.6 L579.0 693.1 L580.0 691.6 L581.0 690.0 L582.0 688.4 L583.0 686.8 L584.0 685.2 L585.0 683.5 L586.0 681.8 L587.0 680.0 L588.0 678.3 L589.0 676.5 L590.0 674.7 L591.0 672.8 L592.0 670.9 L593.0 669.0 L594.0 667.1 L595.0 665.1 L596.0 663.1 L597.0 661.1 L598.0 659.1 L599.0 657.0 L600.0 654.9 L601.0 652.8 L602.0 650.6 L603.0 648.5 L604.0 646.3 L605.0 644.1 L606.0 641.8 L607.0 639.6 L608.0 637.3 L609.0 635.0 L610.0 632.6 L611.0 630.3 L612.0 627.9 L613.0 625.5 L614.0 623.1 L615.0 620.7 L616.0 618.2 L617.0 615.8 L618.0 613.3 L619.0 610.8 L620.0 608.2 L621.0 605.7 L622.0 603.1 L623.0 600.6 L624.0 598.0 L625.0 595.4 L626.0 592.8 L627.0 590.1 L628.0 587.5 L629.0 584.8 L630.0 582.1 L631.0 579.5 L632.0 576.8 L633.2 573.5 L660.0 576.4 L660.8 577.2 L726.2 583.0 L727.0 583.8 L752.0 586.2 L752.0 586.1 L752.2 585.9 L752.4 585.8 L752.6 585.9 M759.0 579.3 L759.2 575.8 L759.2 574.3 L759.9 596.7 L760.6 720.0 L761.8 916.7 L762.0 911.3 L762.3 900.8 L762.5 888.6 M799.5 885.9 L799.8 885.9 L800.0 885.9 L800.8 883.3 L870.3 878.1 L873.2 876.5 L930.4 871.5 L931.4 869.5 L932.4 867.6 L933.4 865.8 L934.4 863.9 L935.4 862.1 L936.4 860.3 L937.4 858.5 L938.4 856.7 L939.4 854.9 L940.4 853.1 L941.4 851.3 L942.4 849.6 L943.4 847.8 L944.4 846.1 L945.4 844.4 L946.4 842.7 L947.4 841.0 L948.4 839.3 L949.4 837.6 L950.4 836.0 L951.4 834.3 L952.4 832.6 L953.4 831.0 L954.4 829.3 L955.4 827.7 L956.4 826.1 L957.4 824.4 L958.4 822.8 L959.4 821.2 L960.4 819.6 L961.4 818.0 L962.4 816.3 L963.4 814.7 L964.4 813.1 L965.4 811.6 L966.4 810.0 L967.4 808.4 L968.4 806.8 L969.4 805.3 L970.4 803.7 L971.4 802.2 L972.4 800.6 L973.4 799.1 L974.4 797.6 L975.4 796.1 L976.4 794.6 L977.4 793.1 L978.4 791.6 L979.4 790.2 L980.4 788.7 L981.4 787.3 L982.4 785.9 L983.4 784.4 L984.4 783.0 L985.4 781.6 L986.4 780.2 L987.4 778.8 L988.4 777.4 L989.4 776.1 L990.4 774.7 L991.4 773.4 L992.4 772.0 L993.4 770.7 L994.4 769.4 L995.4 768.1 L996.4 766.8 L997.4 765.5 L998.4 764.3 L999.4 763.0 L1000.4 761.8 L1001.4 760.6 L1002.4 759.4 L1003.4 758.3 L1004.4 757.1 L1005.4 756.0 L1006.4 754.9 L1007.4 753.8 L1008.4 752.7 L1009.4 751.7 L1010.4 750.6 L1011.4 749.6 L1012.4 748.6 L1013.4 747.6 L1014.4 746.6 L1015.4 745.6 L1016.4 744.7 L1017.4 743.8 L1018.4 742.9 L1019.4 742.0 L1020.4 741.1 L1021.4 740.2 L1022.4 739.3 L1023.4 738.5 L1024.4 737.7 L1025.4 736.9 L1026.4 736.1 L1027.4 735.3 L1028.4 734.6 L1029.4 733.8 L1030.4 733.1 L1031.4 732.4 L1032.4 731.7 L1033.4 731.1 L1034.4 730.4 L1035.4 729.8 L1036.4 729.1 L1037.4 728.5 L1038.4 727.9 L1039.4 727.3 L1040.4 726.8 L1041.4 726.2 L1042.4 725.7 L1043.4 725.2 L1044.4 724.7 L1045.4 724.3 L1046.4 723.8 L1047.4 723.4 L1048.4 723.0 L1049.4 722.6 L1050.4 722.2 L1051.4 721.9 L1052.4 721.5 L1053.4 721.3 L1054.4 721.0 L1055.4 720.8 L1056.4 720.6 L1057.4 720.4 L1058.4 720.2 L1059.4 720.1 L1060.4 719.9 L1061.4 719.8 L1062.4 719.7 L1063.4 719.6 L1064.4 719.5 L1065.4 719.4 L1066.4 719.4 L1067.4 719.4 L1068.4 719.4 L1069.4 719.5 L1070.4 719.6 L1071.4 719.7 L1072.4 719.9 L1073.4 720.0 L1074.4 720.2 L1075.4 720.4 L1076.4 720.6 L1077.4 720.8 L1078.4 721.1 L1079.4 721.4 L1080.4 721.7 L1081.4 722.1 L1082.4 722.5 L1083.4 722.8 L1084.4 723.2 L1085.4 723.6 L1086.4 724.0 L1087.4 724.4 L1088.4 724.9 L1089.4 725.3 L1090.4 725.8 L1091.4 726.2 L1092.4 726.8 L1093.4 727.3 L1094.4 727.8 L1095.4 728.4 L1096.4 729.0 L1097.4 729.6 L1098.4 730.2 L1099.4 730.8 L1100.4 731.4 L1101.4 732.0 L1102.4 732.7 L1103.4 733.3 L1104.4 734.0 L1105.4 734.7 L1106.4 735.4 L1107.4 736.1 L1108.4 736.9 L1109.4 737.7 L1110.4 738.4 L1111.4 739.2 L1112.4 740.0 L1113.4 740.8 L1114.4 741.6 L1115.4 742.5 L1116.4 743.3 L1117.4 744.2 L1118.4 745.1 L1119.4 746.0 L1120.4 746.9 L1121.4 747.9 L1122.4 748.8 L1123.4 749.8 L1124.4 750.8 L1125.4 751.8 L1126.4 752.8 L1127.4 753.8 L1128.4 754.8 L1129.4 755.9 L1130.4 756.9 L1131.4 757.9 L1132.4 759.0 L1133.4 760.0 L1134.4 761.1 L1135.4 762.2 L1136.4 763.3 L1137.4 764.4 L1138.4 765.5 L1139.4 766.6 L1140.4 767.8 L1141.4 768.9 L1142.4 770.1 L1143.4 771.3 L1144.4 772.5 L1145.4 773.7 L1146.4 775.0 L1147.4 776.2 L1148.4 777.5 L1149.4 778.8 L1150.4 780.1 L1151.4 781.4 L1152.4 782.8 L1153.4 784.1 L1154.4 785.5 L1155.4 786.8 L1156.4 788.2 L1157.4 789.6 L1158.4 790.9 L1159.4 792.3 L1160.4 793.7 L1161.4 795.2 L1162.4 796.6 L1163.4 798.0 L1164.4 799.5 L1165.4 800.9 L1166.4 802.4 L1167.4 803.9 L1168.4 805.4 L1169.4 806.8 L1170.4 808.3 L1171.4 809.8 L1172.4 811.3 L1173.4 812.8 L1174.4 814.4 L1175.4 815.9 L1176.4 817.4 L1177.4 819.0 L1178.4 820.5 L1179.4 822.1 L1180.4 823.6 L1181.4 825.2 L1182.4 826.8 L1183.4 828.3 L1184.4 829.9 L1185.4 831.5 L1186.4 833.1 L1187.4 834.6 L1188.4 836.2 L1189.4 837.8 L1190.4 839.5 L1191.4 841.1 L1192.4 842.7 L1193.4 844.3 L1194.4 845.9 L1195.4 847.5 L1196.4 849.1 L1197.4 850.7 L1198.4 852.3 L1199.4 853.9 L1200.4 855.5 L1201.4 857.0 L1202.6 858.4 L1224.5 856.8 L1226.5 855.3 L1292.9 850.7 L1295.5 849.0 L1366.4 844.7 L1369.0 843.2 L1417.0 840.1 L1417.0 840.2 L1417.2 840.2 L1417.4 840.2 L1417.6 840.2 M1432.4 853.3 L1432.8 858.0 L1433.2 780.0" transform="translate(0,0.22)"/><path d="M381.4 555.4 L381.6 561.7 L381.9 566.8 L382.1 569.9 L382.4 570.4 L382.6 568.7 L382.9 565.5 L383.1 561.8 L383.4 558.6 L383.6 556.6 L383.9 556.2 L384.1 557.3 L384.4 559.4 L384.6 561.9 L384.9 564.1 L385.1 565.5 L385.4 565.9 L385.6 565.2 L385.9 563.8 L386.1 562.0 L386.4 560.4 L386.6 559.4 L386.9 559.1 L387.1 559.7 L387.4 560.8 L387.6 562.1 L387.9 563.3 L388.1 564.2 L388.4 564.4 L388.6 564.0 L388.9 563.2 L389.1 562.2 L389.4 561.3 L389.6 560.7 L389.9 560.6 L390.1 560.9 L390.4 561.5 L390.6 562.3 L390.9 563.1 L391.1 563.6 L391.4 563.7 L391.6 563.5 L391.9 563.0 L392.1 562.5 L392.4 561.9 L392.6 561.6 L392.9 561.5 L393.1 561.7 L393.4 562.1 L393.6 562.6 L393.9 563.0 L394.1 563.3 L394.4 563.4 L394.6 563.3 L394.9 563.0 L395.1 562.7 L395.4 562.4 L395.6 562.2 L395.9 562.1 L396.1 562.2 L396.4 562.5 L396.6 562.8 L396.9 563.1 L397.1 563.3 L397.4 563.3 L397.6 563.3 L397.9 563.1 L398.1 562.9 L398.4 562.7 L398.6 562.6 L398.9 562.6 L399.1 562.7 L399.4 562.8 L399.6 563.0 L399.9 563.2 L400.1 563.3 L400.4 563.4 L400.6 563.3 L400.9 563.3 L401.1 563.1 L401.4 563.0 L401.6 563.0 M752.6 585.9 L752.8 586.1 L753.0 586.5 L753.2 586.7 L753.4 586.7 L753.6 586.4 L753.8 585.9 L754.0 585.5 L754.2 585.4 L754.4 585.8 L754.6 586.5 L754.8 587.2 L755.0 587.5 L755.2 587.1 L755.4 586.1 L755.6 585.0 L755.8 584.3 L756.0 584.7 L756.2 586.1 L756.4 587.9 L756.6 589.1 L756.8 589.0 L757.0 587.3 L757.2 584.6 L757.4 582.3 L757.6 581.9 L757.8 584.0 L758.0 587.9 L758.2 591.8 L758.4 593.4 L758.6 591.1 L758.8 585.6 L759.0 579.3 M762.5 888.6 L762.8 877.7 L763.0 870.7 L763.3 868.8 L763.5 871.8 L763.8 878.5 L764.0 886.6 L764.3 894.2 L764.5 899.4 L764.8 901.2 L765.0 899.5 L765.3 895.1 L765.5 889.3 L765.8 883.6 L766.0 879.5 L766.3 877.8 L766.5 878.7 L766.8 881.8 L767.0 886.1 L767.3 890.5 L767.5 893.9 L767.8 895.4 L768.0 894.9 L768.3 892.7 L768.5 889.3 L768.8 885.7 L769.0 882.8 L769.3 881.3 L769.5 881.5 L769.8 883.2 L770.0 885.9 L770.3 888.9 L770.5 891.3 L770.8 892.7 L771.0 892.7 L771.3 891.4 L771.5 889.1 L771.8 886.6 L772.0 884.3 L772.3 883.0 L772.5 882.8 L772.8 883.8 L773.0 885.7 L773.3 887.9 L773.5 889.9 L773.8 891.2 L774.0 891.5 L774.3 890.7 L774.5 889.1 L774.8 887.0 L775.0 884.9 L775.3 883.5 L775.5 883.0 L775.8 883.6 L776.0 885.2 L776.3 887.3 L776.5 889.5 L776.8 891.2 L777.0 891.8 L777.3 891.3 L777.5 889.6 L777.8 887.2 L778.0 884.7 L778.3 882.7 L778.5 881.8 L778.8 882.2 L779.0 884.0 L779.3 886.6 L779.5 889.4 L779.8 891.5 L780.0 892.5 L780.3 892.0 L780.5 890.2 L780.8 887.6 L781.0 884.9 L781.3 882.9 L781.5 882.0 L781.8 882.4 L782.0 883.9 L782.3 886.1 L782.5 888.2 L782.8 889.9 L783.0 890.6 L783.3 890.2 L783.5 889.1 L783.8 887.5 L784.0 885.9 L784.3 884.7 L784.5 884.2 L784.8 884.3 L785.0 885.0 L785.3 886.1 L785.5 887.2 L785.8 888.0 L786.0 888.4 L786.3 888.3 L786.5 887.9 L786.8 887.1 L787.0 886.3 L787.3 885.7 L787.5 885.3 L787.8 885.3 L788.0 885.6 L788.3 886.1 L788.5 886.7 L788.8 887.1 L789.0 887.4 L789.3 887.4 L789.5 887.2 L789.8 886.8 L790.0 886.4 L790.3 886.0 L790.5 885.7 L790.8 885.7 L791.0 885.8 L791.3 886.1 L791.5 886.4 L791.8 886.6 L792.0 886.8 L792.3 886.8 L792.5 886.7 L792.8 886.5 L793.0 886.3 L793.3 886.1 L793.5 885.9 L793.8 885.9 L794.0 885.9 L794.3 886.0 L794.5 886.2 L794.8 886.3 L795.0 886.4 L795.3 886.4 L795.5 886.3 L795.8 886.2 L796.0 886.1 L796.3 886.0 L796.5 885.9 L796.8 885.9 L797.0 885.9 L797.3 886.0 L797.5 886.0 L797.8 886.0 L798.0 886.0 L798.3 886.0 L798.5 886.0 L798.8 886.0 L799.0 885.9 L799.3 885.9 L799.5 885.9 M1417.6 840.2 L1417.8 840.2 L1418.0 840.1 L1418.2 840.0 L1418.4 839.9 L1418.6 839.9 L1418.8 839.8 L1419.0 839.8 L1419.2 839.8 L1419.4 839.9 L1419.6 839.9 L1419.8 840.0 L1420.0 840.1 L1420.2 840.2 L1420.4 840.3 L1420.6 840.2 L1420.8 840.2 L1421.0 840.0 L1421.2 839.8 L1421.4 839.7 L1421.6 839.5 L1421.8 839.4 L1422.0 839.3 L1422.2 839.4 L1422.4 839.5 L1422.6 839.8 L1422.8 840.0 L1423.0 840.3 L1423.2 840.5 L1423.4 840.6 L1423.6 840.6 L1423.8 840.4 L1424.0 840.1 L1424.2 839.6 L1424.4 839.2 L1424.6 838.7 L1424.8 838.4 L1425.0 838.3 L1425.2 838.5 L1425.4 838.9 L1425.6 839.5 L1425.8 840.2 L1426.0 840.9 L1426.2 841.5 L1426.4 841.8 L1426.6 841.7 L1426.8 841.2 L1427.0 840.4 L1427.2 839.3 L1427.4 838.1 L1427.6 837.0 L1427.8 836.3 L1428.0 836.1 L1428.2 836.5 L1428.4 837.5 L1428.6 839.1 L1428.8 840.9 L1429.0 842.7 L1429.2 844.2 L1429.4 845.0 L1429.6 844.8 L1429.8 843.6 L1430.0 841.5 L1430.2 838.7 L1430.4 835.7 L1430.6 833.0 L1430.8 831.1 L1431.0 830.6 L1431.2 831.6 L1431.4 834.3 L1431.6 838.2 L1431.8 842.9 L1432.0 847.6 L1432.2 851.4 L1432.4 853.3" stroke-width="1.45"/></g><path d="M335.5 66V932.5" stroke="#e0e0e0" stroke-width="1" stroke-dasharray="1.2 1.2"/><rect x="1434" y="88" width="2" height="844.5" fill="#852020"/><rect x="346.5" y="93.5" width="11" height="11" fill="#3c3c3c" stroke="#b8b8b8" stroke-width="1"/><path d="M347 94H357L347 104Z" fill="#b8b8b8"/><rect x="1410.5" y="93.5" width="11" height="11" fill="#3c3c3c" stroke="#b8b8b8" stroke-width="1"/><path d="M1411 94H1421V104Z" fill="#b8b8b8"/></svg>
<div style="left:1436px;top:90px;width:73px;height:852.5px;background:#232323;border-right:1px solid #050505;border-top:1px solid #050505;"></div>
<div style="left:1436px;top:510px;width:72px;height:1px;background:#050505;"></div>
<svg style="position:absolute;left:0;top:0" width="1520" height="940"><path d="M1436 113.1H1439.5M1436 151.6H1439.5M1436 195.1H1439.5M1436 225.8H1439.5M1436 247.6H1439.5M1436 263.0H1439.5M1436 281.6H1439.5M1436 102.0H1437.6M1436 123.6H1437.6M1436 133.5H1437.6M1436 142.8H1437.6M1436 167.8H1437.6M1436 182.2H1437.6M1436 206.5H1437.6M1436 216.7H1437.6M1436 233.9H1437.6M1436 241.1H1437.6M1436 253.3H1437.6M1436 258.4H1437.6M1436 267.0H1437.6M1436 270.6H1437.6M1436 273.9H1437.6M1436 276.7H1437.6M1436 279.3H1437.6M1436 287.0H1437.6M1436 290.9H1437.6M1436 293.7H1437.6M1436 487.5H1439.5M1436 449.0H1439.5M1436 405.5H1439.5M1436 374.8H1439.5M1436 353.0H1439.5M1436 337.6H1439.5M1436 319.0H1439.5M1436 498.6H1437.6M1436 477.0H1437.6M1436 467.1H1437.6M1436 457.8H1437.6M1436 432.8H1437.6M1436 418.4H1437.6M1436 394.1H1437.6M1436 383.9H1437.6M1436 366.7H1437.6M1436 359.5H1437.6M1436 347.3H1437.6M1436 342.2H1437.6M1436 333.6H1437.6M1436 330.0H1437.6M1436 326.7H1437.6M1436 323.9H1437.6M1436 321.3H1437.6M1436 313.6H1437.6M1436 309.7H1437.6M1436 306.9H1437.6M1436 300.3H1439.5M1436 533.1H1439.5M1436 571.6H1439.5M1436 615.1H1439.5M1436 645.8H1439.5M1436 667.6H1439.5M1436 683.0H1439.5M1436 701.6H1439.5M1436 522.0H1437.6M1436 543.6H1437.6M1436 553.5H1437.6M1436 562.8H1437.6M1436 587.8H1437.6M1436 602.2H1437.6M1436 626.5H1437.6M1436 636.7H1437.6M1436 653.9H1437.6M1436 661.1H1437.6M1436 673.3H1437.6M1436 678.4H1437.6M1436 687.0H1437.6M1436 690.6H1437.6M1436 693.9H1437.6M1436 696.7H1437.6M1436 699.3H1437.6M1436 707.0H1437.6M1436 710.9H1437.6M1436 713.7H1437.6M1436 907.5H1439.5M1436 869.0H1439.5M1436 825.5H1439.5M1436 794.8H1439.5M1436 773.0H1439.5M1436 757.6H1439.5M1436 739.0H1439.5M1436 918.6H1437.6M1436 897.0H1437.6M1436 887.1H1437.6M1436 877.8H1437.6M1436 852.8H1437.6M1436 838.4H1437.6M1436 814.1H1437.6M1436 803.9H1437.6M1436 786.7H1437.6M1436 779.5H1437.6M1436 767.3H1437.6M1436 762.2H1437.6M1436 753.6H1437.6M1436 750.0H1437.6M1436 746.7H1437.6M1436 743.9H1437.6M1436 741.3H1437.6M1436 733.6H1437.6M1436 729.7H1437.6M1436 726.9H1437.6M1436 720.3H1439.5" stroke="#9a9a9a" stroke-width="1" fill="none"/></svg>
<div style="top:94.41px;font-size:10.5px;line-height:10.5px;color:#a7a7a7;white-space:pre;left:1443.00px;letter-spacing:-0.172px;">dB</div>
<div style="top:108.05px;font-size:10.5px;line-height:10.5px;color:#a7a7a7;white-space:pre;left:1443.40px;letter-spacing:-0.068px;">-1</div>
<div style="top:482.37px;font-size:10.5px;line-height:10.5px;color:#a7a7a7;white-space:pre;left:1443.40px;letter-spacing:-0.068px;">-1</div>
<div style="top:146.54px;font-size:10.5px;line-height:10.5px;color:#a7a7a7;white-space:pre;left:1443.40px;letter-spacing:-0.068px;">-3</div>
<div style="top:443.88px;font-size:10.5px;line-height:10.5px;color:#a7a7a7;white-space:pre;left:1443.40px;letter-spacing:-0.068px;">-3</div>
<div style="top:189.96px;font-size:10.5px;line-height:10.5px;color:#a7a7a7;white-space:pre;left:1443.40px;letter-spacing:-0.068px;">-6</div>
<div style="top:400.46px;font-size:10.5px;line-height:10.5px;color:#a7a7a7;white-space:pre;left:1443.40px;letter-spacing:-0.068px;">-6</div>
<div style="top:220.70px;font-size:10.5px;line-height:10.5px;color:#a7a7a7;white-space:pre;left:1443.40px;letter-spacing:-0.068px;">-9</div>
<div style="top:369.72px;font-size:10.5px;line-height:10.5px;color:#a7a7a7;white-space:pre;left:1443.40px;letter-spacing:-0.068px;">-9</div>
<div style="top:242.46px;font-size:10.5px;line-height:10.5px;color:#a7a7a7;white-space:pre;left:1443.40px;letter-spacing:0.041px;">-12</div>
<div style="top:347.96px;font-size:10.5px;line-height:10.5px;color:#a7a7a7;white-space:pre;left:1443.40px;letter-spacing:0.041px;">-12</div>
<div style="top:257.87px;font-size:10.5px;line-height:10.5px;color:#a7a7a7;white-space:pre;left:1443.40px;letter-spacing:0.041px;">-15</div>
<div style="top:332.56px;font-size:10.5px;line-height:10.5px;color:#a7a7a7;white-space:pre;left:1443.40px;letter-spacing:0.041px;">-15</div>
<div style="top:276.50px;font-size:10.5px;line-height:10.5px;color:#a7a7a7;white-space:pre;left:1443.40px;letter-spacing:0.041px;">-21</div>
<div style="top:313.93px;font-size:10.5px;line-height:10.5px;color:#a7a7a7;white-space:pre;left:1443.40px;letter-spacing:0.041px;">-21</div>
<div style="top:294.91px;font-size:10.5px;line-height:10.5px;color:#a7a7a7;white-space:pre;left:1443.40px;letter-spacing:1.309px;">-∞</div>
<div style="left:1484.1px;top:292.0px;width:21.5px;height:17.8px;background:#1a1a1a;border-radius:3.5px;border:1px solid #2d2d2d;"></div>
<div style="top:514.41px;font-size:10.5px;line-height:10.5px;color:#a7a7a7;white-space:pre;left:1443.00px;letter-spacing:-0.172px;">dB</div>
<div style="top:528.05px;font-size:10.5px;line-height:10.5px;color:#a7a7a7;white-space:pre;left:1443.40px;letter-spacing:-0.068px;">-1</div>
<div style="top:902.37px;font-size:10.5px;line-height:10.5px;color:#a7a7a7;white-space:pre;left:1443.40px;letter-spacing:-0.068px;">-1</div>
<div style="top:566.54px;font-size:10.5px;line-height:10.5px;color:#a7a7a7;white-space:pre;left:1443.40px;letter-spacing:-0.068px;">-3</div>
<div style="top:863.88px;font-size:10.5px;line-height:10.5px;color:#a7a7a7;white-space:pre;left:1443.40px;letter-spacing:-0.068px;">-3</div>
<div style="top:609.96px;font-size:10.5px;line-height:10.5px;color:#a7a7a7;white-space:pre;left:1443.40px;letter-spacing:-0.068px;">-6</div>
<div style="top:820.46px;font-size:10.5px;line-height:10.5px;color:#a7a7a7;white-space:pre;left:1443.40px;letter-spacing:-0.068px;">-6</div>
<div style="top:640.70px;font-size:10.5px;line-height:10.5px;color:#a7a7a7;white-space:pre;left:1443.40px;letter-spacing:-0.068px;">-9</div>
<div style="top:789.72px;font-size:10.5px;line-height:10.5px;color:#a7a7a7;white-space:pre;left:1443.40px;letter-spacing:-0.068px;">-9</div>
<div style="top:662.46px;font-size:10.5px;line-height:10.5px;color:#a7a7a7;white-space:pre;left:1443.40px;letter-spacing:0.041px;">-12</div>
<div style="top:767.96px;font-size:10.5px;line-height:10.5px;color:#a7a7a7;white-space:pre;left:1443.40px;letter-spacing:0.041px;">-12</div>
<div style="top:677.87px;font-size:10.5px;line-height:10.5px;color:#a7a7a7;white-space:pre;left:1443.40px;letter-spacing:0.041px;">-15</div>
<div style="top:752.56px;font-size:10.5px;line-height:10.5px;color:#a7a7a7;white-space:pre;left:1443.40px;letter-spacing:0.041px;">-15</div>
<div style="top:696.50px;font-size:10.5px;line-height:10.5px;color:#a7a7a7;white-space:pre;left:1443.40px;letter-spacing:0.041px;">-21</div>
<div style="top:733.93px;font-size:10.5px;line-height:10.5px;color:#a7a7a7;white-space:pre;left:1443.40px;letter-spacing:0.041px;">-21</div>
<div style="top:714.91px;font-size:10.5px;line-height:10.5px;color:#a7a7a7;white-space:pre;left:1443.40px;letter-spacing:1.309px;">-∞</div>
<div style="left:1484.1px;top:712.0px;width:21.5px;height:17.8px;background:#1a1a1a;border-radius:3.5px;border:1px solid #2d2d2d;"></div>
<div style="top:296.57px;font-size:10.2px;line-height:10.2px;color:#4d8ee0;white-space:pre;left:1492.20px;font-weight:bold;">L</div>
<div style="top:716.57px;font-size:10.2px;line-height:10.2px;color:#4d8ee0;white-space:pre;left:1491.20px;font-weight:bold;">R</div>
<svg style="position:absolute;left:1428.8px;top:78px;overflow:visible" width="11.6" height="11.4" viewBox="0 0 11.6 11.4" ><path d="M0 0H11.6V5.6L5.8 11.4L0 5.6Z" fill="#2f8cf0"/></svg>
<div style="left:1288px;top:378px;width:125px;height:25.5px;background:#262626;"></div>
<div style="left:1357px;top:378px;width:1px;height:25.5px;background:#243224;"></div>
<div style="left:1288px;top:378px;width:9px;height:25.5px;background:#4c4c4c;"></div>
<svg style="position:absolute;left:1290.8px;top:385.6px;overflow:visible" width="4" height="11" viewBox="0 0 4 11" ><path d="M.8 0V11M3 0V11" stroke="#b0b0b0" stroke-width="1" stroke-dasharray="1 1"/></svg>
<svg style="position:absolute;left:1298.6px;top:382px;overflow:visible" width="17" height="14" viewBox="0 0 17 14" ><path d="M1.0 14V12.4" stroke="#c4c4c4" stroke-width="1.1"/><path d="M3.1 14V10.7" stroke="#c4c4c4" stroke-width="1.1"/><path d="M5.2 14V8.9" stroke="#c4c4c4" stroke-width="1.1"/><path d="M7.3 14V7.2" stroke="#c4c4c4" stroke-width="1.1"/><path d="M9.4 14V5.4" stroke="#c4c4c4" stroke-width="1.1"/><path d="M11.5 14V3.7" stroke="#c4c4c4" stroke-width="1.1"/><path d="M13.6 14V1.9" stroke="#c4c4c4" stroke-width="1.1"/><path d="M15.7 14V0.2" stroke="#c4c4c4" stroke-width="1.1"/></svg>
<svg style="position:absolute;left:1320px;top:382px;overflow:visible" width="17" height="17" viewBox="0 0 17 17" ><circle cx="8.4" cy="8.4" r="7.4" fill="none" stroke="#b4b4b4" stroke-width="1.5"/><path d="M8.4 2V9" stroke="#b4b4b4" stroke-width="1.5"/></svg>
<div style="top:385.14px;font-size:12px;line-height:12px;color:#3f8fe0;white-space:pre;left:1342.30px;letter-spacing:-0.791px;font-weight:bold;">+0</div>
<div style="top:385.14px;font-size:12px;line-height:12px;color:#a7a7a7;white-space:pre;left:1358.30px;letter-spacing:-1.648px;font-weight:bold;">dB</div>
<div style="left:1394px;top:381px;width:1px;height:19px;background:#444;"></div>
<div style="left:1397px;top:384px;width:14px;height:14px;background:#1d1d1d;border:1px solid #333;border-radius:2px;"></div>
<svg style="position:absolute;left:1399.5px;top:386px;overflow:visible" width="9" height="9" viewBox="0 0 9 9" ><path d="M5.4 .4L8.6 3.6L7.4 4L5.8 5.6L5.6 7.4L1.6 3.4L3.4 3.2L5 1.6Z" fill="#3f8fe0"/><path d="M3.4 5.6L.4 8.6" stroke="#3f8fe0" stroke-width="1.2"/></svg>
<div style="left:334px;top:932.5px;width:1175px;height:9.5px;background:#2d2d2d;border-bottom:1px solid #050505;border-right:1px solid #050505;"></div>
<svg style="position:absolute;left:909px;top:935.5px;overflow:visible" width="23.3" height="4" viewBox="0 0 23.3 4" ><path d="M0 .75H23.3M0 3.25H23.3" stroke="#b0b0b0" stroke-width="1.2" stroke-dasharray="0.9 0.76"/></svg>
<svg style="position:absolute;left:1485.3px;top:935.8px;overflow:visible" width="5" height="3.4" viewBox="0 0 5 3.4" ><path d="M0 3.4L2.5 0L5 3.4Z" fill="#9a9a9a"/></svg>
<div style="top:955.36px;font-size:16px;line-height:16px;color:#3c86e4;white-space:pre;left:337.70px;letter-spacing:-0.231px;-webkit-text-stroke:0.5px;">1:1.00</div>
<div style="left:692px;top:956px;width:9.4px;height:9.4px;background:#555;"></div>
<svg style="position:absolute;left:721.8px;top:955.8px;overflow:visible" width="9.5" height="9.8" viewBox="0 0 9.5 9.8" ><path d="M0 0L9.5 4.9L0 9.8Z" fill="#c6c6c6"/></svg>
<div style="left:753px;top:956px;width:2.8px;height:9.4px;background:#555;"></div>
<div style="left:757.8px;top:956px;width:2.8px;height:9.4px;background:#555;"></div>
<svg style="position:absolute;left:780.8px;top:955.8px;overflow:visible" width="11.5" height="9.8" viewBox="0 0 11.5 9.8" ><path d="M0 0H2.2V9.8H0Z M11.4 0V9.8L3 4.9Z" fill="#c6c6c6"/></svg>
<svg style="position:absolute;left:809.5px;top:957px;overflow:visible" width="15.5" height="7.6" viewBox="0 0 15.5 7.6" ><path d="M7.6 0V7.6L0 3.8ZM15.4 0V7.6L7.8 3.8Z" fill="#c6c6c6"/></svg>
<svg style="position:absolute;left:838.8px;top:957px;overflow:visible" width="15.5" height="7.6" viewBox="0 0 15.5 7.6" ><path d="M0 0V7.6L7.6 3.8ZM7.8 0V7.6L15.4 3.8Z" fill="#c6c6c6"/></svg>
<svg style="position:absolute;left:872px;top:955.8px;overflow:visible" width="11.5" height="9.8" viewBox="0 0 11.5 9.8" ><path d="M9.2 0H11.4V9.8H9.2Z M0 0V9.8L8.4 4.9Z" fill="#c6c6c6"/></svg>
<svg style="position:absolute;left:901.8px;top:955.6px;overflow:visible" width="10.4" height="10.4" viewBox="0 0 10.4 10.4" ><circle cx="5.2" cy="5.2" r="5.2" fill="#ee3b3e"/></svg>
<svg style="position:absolute;left:930px;top:955px;overflow:visible" width="14" height="11.5" viewBox="0 0 14 11.5" ><path d="M1 5V10.6H13V7.4" stroke="#c6c6c6" stroke-width="1.7" fill="none"/><path d="M3.6 7.6Q3.8 3 8 3V.2L12.6 4.2L8 8.2V5.4Q5.2 5.2 3.6 7.6Z" fill="#c6c6c6"/></svg>
<svg style="position:absolute;left:958.8px;top:955.6px;overflow:visible" width="16.5" height="10" viewBox="0 0 16.5 10" ><path d="M4.4 .4Q2.8 .4 2.8 2V3.6Q2.8 5 1.4 5Q2.8 5 2.8 6.4V8Q2.8 9.6 4.4 9.6" stroke="#c6c6c6" stroke-width="1.2" fill="none"/><path d="M6.4 0V10" stroke="#c6c6c6" stroke-width="1.2"/><path d="M8.4 .4Q10 .4 10 2V3.6Q10 5 11.4 5Q10 5 10 6.4V8Q10 9.6 8.4 9.6" stroke="#c6c6c6" stroke-width="1.2" fill="none"/><path d="M12 2.2L16.4 5L12 7.8Z" fill="#c6c6c6"/><path d="M4 5H8" stroke="#c6c6c6" stroke-width="1.2"/></svg>
<svg style="position:absolute;left:1212.3px;top:953px;overflow:visible" width="17" height="17" viewBox="0 0 17 17" ><path d="M2.2 1V15" stroke="#c0c0c0" stroke-width="1.2"/><path d="M2.2 0L4.4 3H0.0ZM2.2 16L4.4 13H0.0Z" fill="#c0c0c0"/><circle cx="9.4" cy="7.4" r="3.6" fill="none" stroke="#c0c0c0" stroke-width="1.3"/><path d="M11.992 9.992L15.592 13.792000000000002" stroke="#c0c0c0" stroke-width="1.9"/><path d="M7.4 7.4H11.4" stroke="#c0c0c0" stroke-width="1.1"/><path d="M9.4 5.4V9.4" stroke="#c0c0c0" stroke-width="1.1"/></svg>
<svg style="position:absolute;left:1241.6px;top:953px;overflow:visible" width="17" height="17" viewBox="0 0 17 17" ><path d="M2.2 1V15" stroke="#c0c0c0" stroke-width="1.2"/><path d="M2.2 0L4.4 3H0.0ZM2.2 16L4.4 13H0.0Z" fill="#c0c0c0"/><circle cx="9.4" cy="7.4" r="3.6" fill="none" stroke="#c0c0c0" stroke-width="1.3"/><path d="M11.992 9.992L15.592 13.792000000000002" stroke="#c0c0c0" stroke-width="1.9"/><path d="M7.4 7.4H11.4" stroke="#c0c0c0" stroke-width="1.1"/></svg>
<svg style="position:absolute;left:1271.6px;top:952px;overflow:visible" width="18" height="18" viewBox="0 0 18 18" ><path d="M1 2.4H16" stroke="#c0c0c0" stroke-width="1.2"/><path d="M0 2.4L3 4.6V0.19999999999999973ZM17 2.4L14 4.6V0.19999999999999973Z" fill="#c0c0c0"/><circle cx="8.4" cy="10" r="3.6" fill="none" stroke="#c0c0c0" stroke-width="1.3"/><path d="M10.992 12.592L14.592 16.392" stroke="#c0c0c0" stroke-width="1.9"/><path d="M6.4 10H10.4" stroke="#c0c0c0" stroke-width="1.1"/><path d="M8.4 8V12" stroke="#c0c0c0" stroke-width="1.1"/></svg>
<svg style="position:absolute;left:1302px;top:952px;overflow:visible" width="18" height="18" viewBox="0 0 18 18" ><path d="M1 2.4H16" stroke="#4a4a4a" stroke-width="1.2"/><path d="M0 2.4L3 4.6V0.19999999999999973ZM17 2.4L14 4.6V0.19999999999999973Z" fill="#4a4a4a"/><circle cx="8.4" cy="10" r="3.6" fill="none" stroke="#4a4a4a" stroke-width="1.3"/><path d="M10.992 12.592L14.592 16.392" stroke="#4a4a4a" stroke-width="1.9"/><path d="M6.4 10H10.4" stroke="#4a4a4a" stroke-width="1.1"/></svg>
<svg style="position:absolute;left:1331.8px;top:952.2px;overflow:visible" width="18" height="18" viewBox="0 0 18 18" ><circle cx="8.7" cy="8.5" r="4" fill="none" stroke="#c0c0c0" stroke-width="1.35"/><path d="M6.7 8.5H10.7" stroke="#c0c0c0" stroke-width="1.3"/><path d="M11.6 11.4L15.6 15.6" stroke="#c0c0c0" stroke-width="1.9"/><path d="M8.7 .4L10.7 2.9H6.7ZM8.7 16.8L10.7 14.3H6.7ZM.6 8.5L3.1 6.5V10.5ZM16.9 8.5L14.4 6.5V10.5Z" fill="#c0c0c0"/></svg>
<svg style="position:absolute;left:1361.5px;top:954px;overflow:visible" width="20" height="16" viewBox="0 0 20 16" ><path d="M2.6 2Q1.2 2 1.2 3.6V6Q1.2 7.4 0 7.4Q1.2 7.4 1.2 8.8V11.2Q1.2 12.8 2.6 12.8" stroke="#c0c0c0" stroke-width="1.2" fill="none"/><circle cx="12.4" cy="6.6" r="3.6" fill="none" stroke="#c0c0c0" stroke-width="1.3"/><path d="M14.992 9.192L18.592000000000002 12.992" stroke="#c0c0c0" stroke-width="1.9"/></svg>
<svg style="position:absolute;left:1393.7px;top:954px;overflow:visible" width="20" height="16" viewBox="0 0 20 16" ><path d="M0 2Q1.4 2 1.4 3.6V6Q1.4 7.4 2.6 7.4Q1.4 7.4 1.4 8.8V11.2Q1.4 12.8 0 12.8" stroke="#c0c0c0" stroke-width="1.2" fill="none"/><circle cx="11" cy="6.6" r="3.6" fill="none" stroke="#c0c0c0" stroke-width="1.3"/><path d="M13.592 9.192L17.192 12.992" stroke="#c0c0c0" stroke-width="1.9"/></svg>
<svg style="position:absolute;left:1420.3px;top:954px;overflow:visible" width="22" height="16" viewBox="0 0 22 16" ><path d="M2.6 2Q1.2 2 1.2 3.6V6Q1.2 7.4 0 7.4Q1.2 7.4 1.2 8.8V11.2Q1.2 12.8 2.6 12.8" stroke="#c0c0c0" stroke-width="1.2" fill="none"/><path d="M4.4 2Q5.800000000000001 2 5.800000000000001 3.6V6Q5.800000000000001 7.4 7.0 7.4Q5.800000000000001 7.4 5.800000000000001 8.8V11.2Q5.800000000000001 12.8 4.4 12.8" stroke="#c0c0c0" stroke-width="1.2" fill="none"/><circle cx="14" cy="6.6" r="3.6" fill="none" stroke="#c0c0c0" stroke-width="1.3"/><path d="M16.592 9.192L20.192 12.992" stroke="#c0c0c0" stroke-width="1.9"/></svg>
<svg style="position:absolute;left:1453.8px;top:952.4px;overflow:visible" width="14" height="16" viewBox="0 0 14 16" ><circle cx="7.4" cy="9.6" r="5.4" fill="none" stroke="#c0c0c0" stroke-width="1.5"/><path d="M7.4 9.6V1.4M5.4 1H9.4" stroke="#c0c0c0" stroke-width="1.5"/><path d="M7.4 4.2A5.4 5.4 0 0 1 7.4 9.6Z" fill="#c0c0c0"/><path d="M1.2 3.4L3.6 5.4" stroke="#c0c0c0" stroke-width="1.4"/></svg>
<svg style="position:absolute;left:1483px;top:952.6px;overflow:visible" width="17" height="17" viewBox="0 0 17 17" ><path d="M.4 .6H5M.4 15.8H5M2.7 .6V15.8" stroke="#4a4a4a" stroke-width="1.1"/><circle cx="9.4" cy="8.2" r="3.6" fill="none" stroke="#4a4a4a" stroke-width="1.3"/><path d="M11.992 10.792L15.592 14.591999999999999" stroke="#4a4a4a" stroke-width="1.9"/><path d="M7.4 8.2H11.4" stroke="#4a4a4a" stroke-width="1.1"/><path d="M9.4 6.199999999999999V10.2" stroke="#4a4a4a" stroke-width="1.1"/></svg>
<div style="left:1520px;top:-2px;width:39px;height:982px;background:#232323;"></div>
<div style="left:1521px;top:13px;width:37px;height:1px;background:#2e2e2e;"></div>
<div style="left:1521px;top:42.5px;width:37px;height:1px;background:#2e2e2e;"></div>
<div style="left:1521px;top:78.5px;width:37px;height:1px;background:#2e2e2e;"></div>
<div style="left:1521px;top:109.5px;width:37px;height:1px;background:#2e2e2e;"></div>
<div style="left:1532.7px;top:0px;width:1.8px;height:2.3px;background:#e6e6e6;"></div>
<div style="left:1532.7px;top:1px;width:6px;height:1.3px;background:#e6e6e6;"></div>
<div style="left:1539px;top:2.6px;width:1px;height:5.2px;background:#3a3a3a;"></div>
<div style="top:24.69px;font-size:11px;line-height:11px;color:#b0b0b0;white-space:pre;left:1531.20px;font-style:italic;width:26.5px;overflow:hidden;letter-spacing:-0.2px;">Keine</div>
<div style="top:54.69px;font-size:11px;line-height:11px;color:#4f4f4f;white-space:pre;left:1531.20px;width:26.5px;overflow:hidden;letter-spacing:-0.1px;">Vorgabe</div>
<div style="left:1521.5px;top:967px;width:36px;height:12.5px;background:#1f1f1f;"></div>
<div style="left:1563px;top:-2px;width:357px;height:982px;background:#232323;"></div>
<div style="top:-1.51px;font-size:11px;line-height:11px;color:#dedede;white-space:pre;left:1575.60px;letter-spacing:0.024px;">Metadaten</div>
<svg style="position:absolute;left:1637px;top:1px;overflow:visible" width="9" height="7" viewBox="0 0 9 7" ><path d="M0 .5H9M0 3.5H9M0 6.5H9" stroke="#c8c8c8" stroke-width="1" fill="none"/></svg>
<div style="left:1568px;top:28.5px;width:346px;height:946px;border:1px solid #2e2e2e;border-radius:4px;"></div>
<div style="top:37.99px;font-size:11px;line-height:11px;color:#a7a7a7;white-space:pre;left:1582.00px;letter-spacing:-0.680px;">BWF</div>
<div style="top:37.99px;font-size:11px;line-height:11px;color:#dedede;white-space:pre;left:1631.70px;letter-spacing:-0.173px;">ID3</div>
<div style="top:37.99px;font-size:11px;line-height:11px;color:#a7a7a7;white-space:pre;left:1676.10px;letter-spacing:-0.291px;">iXML</div>
<div style="top:37.99px;font-size:11px;line-height:11px;color:#a7a7a7;white-space:pre;left:1727.50px;letter-spacing:-0.610px;">RIFF</div>
<div style="top:37.99px;font-size:11px;line-height:11px;color:#a7a7a7;white-space:pre;left:1776.50px;letter-spacing:-0.687px;">CART</div>
<div style="top:37.99px;font-size:11px;line-height:11px;color:#a7a7a7;white-space:pre;left:1830.50px;letter-spacing:-0.279px;">XMP</div>
<div style="left:1631.4px;top:51.7px;width:17.2px;height:2px;background:#e0e0e0;"></div>
<div style="top:65.69px;font-size:11px;line-height:11px;color:#a7a7a7;white-space:pre;right:243.00px;letter-spacing:0.08px;">Titel:</div>
<div style="left:1681px;top:62px;width:227px;height:18px;background:#171717;border:1px solid #2c2c2c;border-radius:3px;"></div>
<div style="top:88.69px;font-size:11px;line-height:11px;color:#a7a7a7;white-space:pre;right:243.00px;letter-spacing:0.08px;">Künstler:</div>
<div style="left:1681px;top:85px;width:227px;height:18px;background:#171717;border:1px solid #2c2c2c;border-radius:3px;"></div>
<div style="top:111.69px;font-size:11px;line-height:11px;color:#a7a7a7;white-space:pre;right:243.00px;letter-spacing:0.08px;">Album:</div>
<div style="left:1681px;top:108px;width:227px;height:18px;background:#171717;border:1px solid #2c2c2c;border-radius:3px;"></div>
<div style="top:134.69px;font-size:11px;line-height:11px;color:#a7a7a7;white-space:pre;right:243.00px;letter-spacing:0.08px;">Albencover:</div>
<div style="left:1681px;top:131px;width:80px;height:80px;background:#212121;border:1px solid #2d2d2d;border-radius:3px;"></div>
<div style="left:1775px;top:131.8px;width:90.5px;height:18.7px;background:#2a2a2a;border-radius:3px;"></div>
<div style="top:135.19px;font-size:11px;line-height:11px;color:#4a4a4a;white-space:pre;left:1785.30px;letter-spacing:-0.234px;">Durchsuchen...</div>
<div style="top:218.89px;font-size:11px;line-height:11px;color:#a7a7a7;white-space:pre;right:243.00px;letter-spacing:0.08px;">Aufnahmedatum:</div>
<div style="left:1681px;top:215.5px;width:227px;height:18px;background:#171717;border:1px solid #2c2c2c;border-radius:3px;"></div>
<div style="top:219.71px;font-size:10.5px;line-height:10.5px;color:#d2d2d2;white-space:pre;left:1687.50px;letter-spacing:-0.002px;">19.06.2022 09:45:59</div>
<div style="top:241.89px;font-size:11px;line-height:11px;color:#a7a7a7;white-space:pre;right:243.00px;letter-spacing:0.08px;">Kommentare:</div>
<div style="left:1681px;top:238.5px;width:227px;height:43.5px;background:#171717;border:1px solid #2c2c2c;border-radius:3px;"></div>
<div style="top:290.69px;font-size:11px;line-height:11px;color:#a7a7a7;white-space:pre;right:243.00px;letter-spacing:0.08px;">Genre:</div>
<div style="left:1681px;top:287.5px;width:227px;height:18.5px;background:#171717;border:1px solid #2c2c2c;border-radius:3px;"></div>
<div style="left:1889.5px;top:288.5px;width:1px;height:16.8px;background:#262626;"></div>
<svg style="position:absolute;left:1895px;top:294.5px;overflow:visible" width="7.5" height="5" viewBox="0 0 7.5 5" ><path d="M.6 .6L3.7 3.8L6.8 .6" stroke="#bdbdbd" stroke-width="1.3" fill="none"/></svg>
<div style="top:313.69px;font-size:11px;line-height:11px;color:#a7a7a7;white-space:pre;right:243.00px;letter-spacing:0.08px;">Spurnummer:</div>
<div style="left:1681px;top:310px;width:227px;height:18px;background:#171717;border:1px solid #2c2c2c;border-radius:3px;"></div>
<div style="left:1681.3px;top:332px;width:13.7px;height:14.3px;background:#a6a6a6;border-radius:2.5px;"></div>
<div style="left:1684.8px;top:337.6px;width:6.6px;height:2.8px;background:#262626;border-radius:.5px;"></div>
<div style="top:333.99px;font-size:11px;line-height:11px;color:#a7a7a7;white-space:pre;left:1698.80px;letter-spacing:0.106px;">Teil einer Compilation</div>
<div style="top:354.69px;font-size:11px;line-height:11px;color:#a7a7a7;white-space:pre;right:243.00px;letter-spacing:0.08px;">Song-Text:</div>
<div style="left:1681px;top:351.5px;width:227px;height:43.5px;background:#171717;border:1px solid #2c2c2c;border-radius:3px;"></div>
<div style="top:403.69px;font-size:11px;line-height:11px;color:#a7a7a7;white-space:pre;right:243.00px;letter-spacing:0.08px;">Setzer:</div>
<div style="left:1681px;top:400.5px;width:227px;height:18px;background:#171717;border:1px solid #2c2c2c;border-radius:3px;"></div>
<div style="top:426.69px;font-size:11px;line-height:11px;color:#a7a7a7;white-space:pre;right:243.00px;letter-spacing:0.08px;">Teil eines Sets:</div>
<div style="left:1681px;top:423.5px;width:227px;height:18px;background:#171717;border:1px solid #2c2c2c;border-radius:3px;"></div>
<div style="top:449.69px;font-size:11px;line-height:11px;color:#a7a7a7;white-space:pre;right:243.00px;letter-spacing:0.08px;">Neu abgemischt von:</div>
<div style="left:1681px;top:446.5px;width:227px;height:18px;background:#171717;border:1px solid #2c2c2c;border-radius:3px;"></div>
<div style="top:472.69px;font-size:11px;line-height:11px;color:#a7a7a7;white-space:pre;right:243.00px;letter-spacing:0.08px;">Copyright:</div>
<div style="left:1681px;top:469.5px;width:227px;height:18px;background:#171717;border:1px solid #2c2c2c;border-radius:3px;"></div>
<div style="top:495.69px;font-size:11px;line-height:11px;color:#a7a7a7;white-space:pre;right:243.00px;letter-spacing:0.08px;">Copyright-URL:</div>
<div style="left:1681px;top:492.5px;width:205px;height:18px;background:#171717;border:1px solid #2c2c2c;border-radius:3px;"></div>
<svg style="position:absolute;left:1891px;top:495px;overflow:visible" width="15" height="12.5" viewBox="0 0 15 12.5" ><path d="M.4 12.2Q1.2 4.6 8.2 4.4V.4L14.8 6.2L8.2 12V8Q3.6 7.8 .4 12.2Z" fill="#cfcfcf"/></svg>
<div style="left:326px;top:984px;width:1316px;height:96px;background:#232323;"></div>
<div style="top:993.19px;font-size:11px;line-height:11px;color:#dedede;white-space:pre;left:338.00px;letter-spacing:-0.227px;">Pegel</div>
<svg style="position:absolute;left:373.8px;top:995px;overflow:visible" width="9" height="7" viewBox="0 0 9 7" ><path d="M0 .5H9M0 3.5H9M0 6.5H9" stroke="#c8c8c8" stroke-width="1" fill="none"/></svg>
<div style="left:332.5px;top:1017px;width:1303.5px;height:40.5px;background:#1e1e1e;border:1px solid #050505;"></div>
<div style="left:1626px;top:1017px;width:1px;height:40.5px;background:#050505;"></div>
<div style="left:1626px;top:1037px;width:10px;height:1px;background:#050505;"></div>
<div style="left:333.5px;top:1018px;width:1px;height:18.6px;background:#ddd64c;"></div>
<div style="left:333.5px;top:1037.6px;width:1px;height:18.9px;background:#ddd64c;"></div>
<svg style="position:absolute;left:0;top:0" width="1650" height="1080"><path d="M1625.2 1058V1062.4M1614.4 1058V1060.4M1603.7 1058V1060.4M1592.9 1058V1062.4M1582.2 1058V1060.4M1571.4 1058V1060.4M1560.6 1058V1062.4M1549.9 1058V1060.4M1539.1 1058V1060.4M1528.4 1058V1062.4M1517.6 1058V1060.4M1506.8 1058V1060.4M1496.1 1058V1062.4M1485.3 1058V1060.4M1474.6 1058V1060.4M1463.8 1058V1062.4M1453.0 1058V1060.4M1442.3 1058V1060.4M1431.5 1058V1062.4M1420.8 1058V1060.4M1410.0 1058V1060.4M1399.2 1058V1062.4M1388.5 1058V1060.4M1377.7 1058V1060.4M1367.0 1058V1062.4M1356.2 1058V1060.4M1345.4 1058V1060.4M1334.7 1058V1062.4M1323.9 1058V1060.4M1313.2 1058V1060.4M1302.4 1058V1062.4M1291.6 1058V1060.4M1280.9 1058V1060.4M1270.1 1058V1062.4M1259.4 1058V1060.4M1248.6 1058V1060.4M1237.8 1058V1062.4M1227.1 1058V1060.4M1216.3 1058V1060.4M1205.6 1058V1062.4M1194.8 1058V1060.4M1184.0 1058V1060.4M1173.3 1058V1062.4M1162.5 1058V1060.4M1151.8 1058V1060.4M1141.0 1058V1062.4M1130.2 1058V1060.4M1119.5 1058V1060.4M1108.7 1058V1062.4M1098.0 1058V1060.4M1087.2 1058V1060.4M1076.4 1058V1062.4M1065.7 1058V1060.4M1054.9 1058V1060.4M1044.2 1058V1062.4M1033.4 1058V1060.4M1022.6 1058V1060.4M1011.9 1058V1062.4M1001.1 1058V1060.4M990.4 1058V1060.4M979.6 1058V1062.4M968.8 1058V1060.4M958.1 1058V1060.4M947.3 1058V1062.4M936.6 1058V1060.4M925.8 1058V1060.4M915.0 1058V1062.4M904.3 1058V1060.4M893.5 1058V1060.4M882.8 1058V1062.4M872.0 1058V1060.4M861.2 1058V1060.4M850.5 1058V1062.4M839.7 1058V1060.4M829.0 1058V1060.4M818.2 1058V1062.4M807.4 1058V1060.4M796.7 1058V1060.4M785.9 1058V1062.4M775.2 1058V1060.4M764.4 1058V1060.4M753.6 1058V1062.4M742.9 1058V1060.4M732.1 1058V1060.4M721.4 1058V1062.4M710.6 1058V1060.4M699.8 1058V1060.4M689.1 1058V1062.4M678.3 1058V1060.4M667.6 1058V1060.4M656.8 1058V1062.4M646.0 1058V1060.4M635.3 1058V1060.4M624.5 1058V1062.4M613.8 1058V1060.4M603.0 1058V1060.4M592.2 1058V1062.4M581.5 1058V1060.4M570.7 1058V1060.4M560.0 1058V1062.4M549.2 1058V1060.4M538.4 1058V1060.4M527.7 1058V1062.4M516.9 1058V1060.4M506.2 1058V1060.4M495.4 1058V1062.4M484.6 1058V1060.4M473.9 1058V1060.4M463.1 1058V1062.4M452.4 1058V1060.4M441.6 1058V1060.4M430.8 1058V1062.4M420.1 1058V1060.4M409.3 1058V1060.4M398.6 1058V1062.4M387.8 1058V1060.4M377.0 1058V1060.4M366.3 1058V1062.4M355.5 1058V1060.4M344.8 1058V1060.4M333.5 1058V1062.4" stroke="#8e8e8e" stroke-width="1" fill="none"/></svg>
<div style="top:1064.96px;font-size:9.5px;line-height:9.5px;color:#a7a7a7;white-space:pre;left:332.00px;letter-spacing:-0.310px;">dB</div>
<div style="top:1064.96px;font-size:9.5px;line-height:9.5px;color:#a7a7a7;white-space:pre;left:1622.00px;">0</div>
<div style="top:1064.96px;font-size:9.5px;line-height:9.5px;color:#a7a7a7;white-space:pre;left:1587.72px;letter-spacing:0.576px;">-3</div>
<div style="top:1064.96px;font-size:9.5px;line-height:9.5px;color:#a7a7a7;white-space:pre;left:1555.44px;letter-spacing:0.576px;">-6</div>
<div style="top:1064.96px;font-size:9.5px;line-height:9.5px;color:#a7a7a7;white-space:pre;left:1523.16px;letter-spacing:0.576px;">-9</div>
<div style="top:1064.96px;font-size:9.5px;line-height:9.5px;color:#a7a7a7;white-space:pre;left:1488.58px;letter-spacing:0.156px;">-12</div>
<div style="top:1064.96px;font-size:9.5px;line-height:9.5px;color:#a7a7a7;white-space:pre;left:1456.30px;letter-spacing:0.156px;">-15</div>
<div style="top:1064.96px;font-size:9.5px;line-height:9.5px;color:#a7a7a7;white-space:pre;left:1424.02px;letter-spacing:0.156px;">-18</div>
<div style="top:1064.96px;font-size:9.5px;line-height:9.5px;color:#a7a7a7;white-space:pre;left:1391.74px;letter-spacing:0.156px;">-21</div>
<div style="top:1064.96px;font-size:9.5px;line-height:9.5px;color:#a7a7a7;white-space:pre;left:1359.46px;letter-spacing:0.156px;">-24</div>
<div style="top:1064.96px;font-size:9.5px;line-height:9.5px;color:#a7a7a7;white-space:pre;left:1327.18px;letter-spacing:0.156px;">-27</div>
<div style="top:1064.96px;font-size:9.5px;line-height:9.5px;color:#a7a7a7;white-space:pre;left:1294.90px;letter-spacing:0.156px;">-30</div>
<div style="top:1064.96px;font-size:9.5px;line-height:9.5px;color:#a7a7a7;white-space:pre;left:1262.62px;letter-spacing:0.156px;">-33</div>
<div style="top:1064.96px;font-size:9.5px;line-height:9.5px;color:#a7a7a7;white-space:pre;left:1230.34px;letter-spacing:0.156px;">-36</div>
<div style="top:1064.96px;font-size:9.5px;line-height:9.5px;color:#a7a7a7;white-space:pre;left:1198.06px;letter-spacing:0.156px;">-39</div>
<div style="top:1064.96px;font-size:9.5px;line-height:9.5px;color:#a7a7a7;white-space:pre;left:1165.78px;letter-spacing:0.156px;">-42</div>
<div style="top:1064.96px;font-size:9.5px;line-height:9.5px;color:#a7a7a7;white-space:pre;left:1133.50px;letter-spacing:0.156px;">-45</div>
<div style="top:1064.96px;font-size:9.5px;line-height:9.5px;color:#a7a7a7;white-space:pre;left:1101.22px;letter-spacing:0.156px;">-48</div>
<div style="top:1064.96px;font-size:9.5px;line-height:9.5px;color:#a7a7a7;white-space:pre;left:1068.94px;letter-spacing:0.156px;">-51</div>
<div style="top:1064.96px;font-size:9.5px;line-height:9.5px;color:#a7a7a7;white-space:pre;left:1036.66px;letter-spacing:0.156px;">-54</div>
<div style="top:1064.96px;font-size:9.5px;line-height:9.5px;color:#a7a7a7;white-space:pre;left:1004.38px;letter-spacing:0.156px;">-57</div>
<div style="top:1064.96px;font-size:9.5px;line-height:9.5px;color:#a7a7a7;white-space:pre;left:972.10px;letter-spacing:0.156px;">-60</div>
<div style="top:1064.96px;font-size:9.5px;line-height:9.5px;color:#a7a7a7;white-space:pre;left:939.82px;letter-spacing:0.156px;">-63</div>
<div style="top:1064.96px;font-size:9.5px;line-height:9.5px;color:#a7a7a7;white-space:pre;left:907.54px;letter-spacing:0.156px;">-66</div>
<div style="top:1064.96px;font-size:9.5px;line-height:9.5px;color:#a7a7a7;white-space:pre;left:875.26px;letter-spacing:0.156px;">-69</div>
<div style="top:1064.96px;font-size:9.5px;line-height:9.5px;color:#a7a7a7;white-space:pre;left:842.98px;letter-spacing:0.156px;">-72</div>
<div style="top:1064.96px;font-size:9.5px;line-height:9.5px;color:#a7a7a7;white-space:pre;left:810.70px;letter-spacing:0.156px;">-75</div>
<div style="top:1064.96px;font-size:9.5px;line-height:9.5px;color:#a7a7a7;white-space:pre;left:778.42px;letter-spacing:0.156px;">-78</div>
<div style="top:1064.96px;font-size:9.5px;line-height:9.5px;color:#a7a7a7;white-space:pre;left:746.14px;letter-spacing:0.156px;">-81</div>
<div style="top:1064.96px;font-size:9.5px;line-height:9.5px;color:#a7a7a7;white-space:pre;left:713.86px;letter-spacing:0.156px;">-84</div>
<div style="top:1064.96px;font-size:9.5px;line-height:9.5px;color:#a7a7a7;white-space:pre;left:681.58px;letter-spacing:0.156px;">-87</div>
<div style="top:1064.96px;font-size:9.5px;line-height:9.5px;color:#a7a7a7;white-space:pre;left:649.30px;letter-spacing:0.156px;">-90</div>
<div style="top:1064.96px;font-size:9.5px;line-height:9.5px;color:#a7a7a7;white-space:pre;left:617.02px;letter-spacing:0.156px;">-93</div>
<div style="top:1064.96px;font-size:9.5px;line-height:9.5px;color:#a7a7a7;white-space:pre;left:584.74px;letter-spacing:0.156px;">-96</div>
<div style="top:1064.96px;font-size:9.5px;line-height:9.5px;color:#a7a7a7;white-space:pre;left:552.46px;letter-spacing:0.156px;">-99</div>
<div style="top:1064.96px;font-size:9.5px;line-height:9.5px;color:#a7a7a7;white-space:pre;left:518.03px;letter-spacing:-0.129px;">-102</div>
<div style="top:1064.96px;font-size:9.5px;line-height:9.5px;color:#a7a7a7;white-space:pre;left:485.75px;letter-spacing:-0.129px;">-105</div>
<div style="top:1064.96px;font-size:9.5px;line-height:9.5px;color:#a7a7a7;white-space:pre;left:453.47px;letter-spacing:-0.129px;">-108</div>
<div style="top:1064.96px;font-size:9.5px;line-height:9.5px;color:#a7a7a7;white-space:pre;left:421.19px;letter-spacing:0.224px;">-111</div>
<div style="top:1064.96px;font-size:9.5px;line-height:9.5px;color:#a7a7a7;white-space:pre;left:388.91px;letter-spacing:0.048px;">-114</div>
<div style="top:1064.96px;font-size:9.5px;line-height:9.5px;color:#a7a7a7;white-space:pre;left:356.63px;letter-spacing:0.048px;">-117</div>
<div style="left:1646px;top:984px;width:274px;height:96px;background:#232323;"></div>
<div style="top:993.19px;font-size:11px;line-height:11px;color:#dedede;white-space:pre;left:1658.00px;letter-spacing:0.086px;">Auswahl/Ansicht</div>
<svg style="position:absolute;left:1748.8px;top:995px;overflow:visible" width="9" height="7" viewBox="0 0 9 7" ><path d="M0 .5H9M0 3.5H9M0 6.5H9" stroke="#c8c8c8" stroke-width="1" fill="none"/></svg>
<div style="top:1017.69px;font-size:11px;line-height:11px;color:#a7a7a7;white-space:pre;left:1704.30px;letter-spacing:-0.106px;">Start</div>
<div style="top:1017.69px;font-size:11px;line-height:11px;color:#a7a7a7;white-space:pre;left:1776.30px;letter-spacing:-0.298px;">Ende</div>
<div style="top:1017.69px;font-size:11px;line-height:11px;color:#a7a7a7;white-space:pre;left:1847.50px;letter-spacing:-0.092px;">Dauer</div>
<div style="top:1036.99px;font-size:11px;line-height:11px;color:#a7a7a7;white-space:pre;left:1657.50px;letter-spacing:-0.040px;">Auswahl</div>
<div style="top:1057.69px;font-size:11px;line-height:11px;color:#a7a7a7;white-space:pre;left:1657.50px;letter-spacing:-0.082px;">Ansicht</div>
<div style="top:1036.99px;font-size:11px;line-height:11px;color:#3f8fe0;white-space:pre;left:1706.80px;letter-spacing:-0.264px;">1:1.00</div>
<div style="top:1036.99px;font-size:11px;line-height:11px;color:#3f8fe0;white-space:pre;left:1778.80px;letter-spacing:-0.314px;">1:1.00</div>
<div style="top:1036.99px;font-size:11px;line-height:11px;color:#3f8fe0;white-space:pre;left:1849.30px;letter-spacing:-0.181px;">0:0.00</div>
<div style="top:1057.69px;font-size:11px;line-height:11px;color:#3f8fe0;white-space:pre;left:1706.80px;letter-spacing:-0.264px;">1:1.00</div>
<div style="top:1057.69px;font-size:11px;line-height:11px;color:#3f8fe0;white-space:pre;left:1778.80px;letter-spacing:-0.314px;">1:1.00</div>
<div style="top:1057.69px;font-size:11px;line-height:11px;color:#3f8fe0;white-space:pre;left:1849.30px;letter-spacing:-0.181px;">0:0.00</div>
</body></html>
